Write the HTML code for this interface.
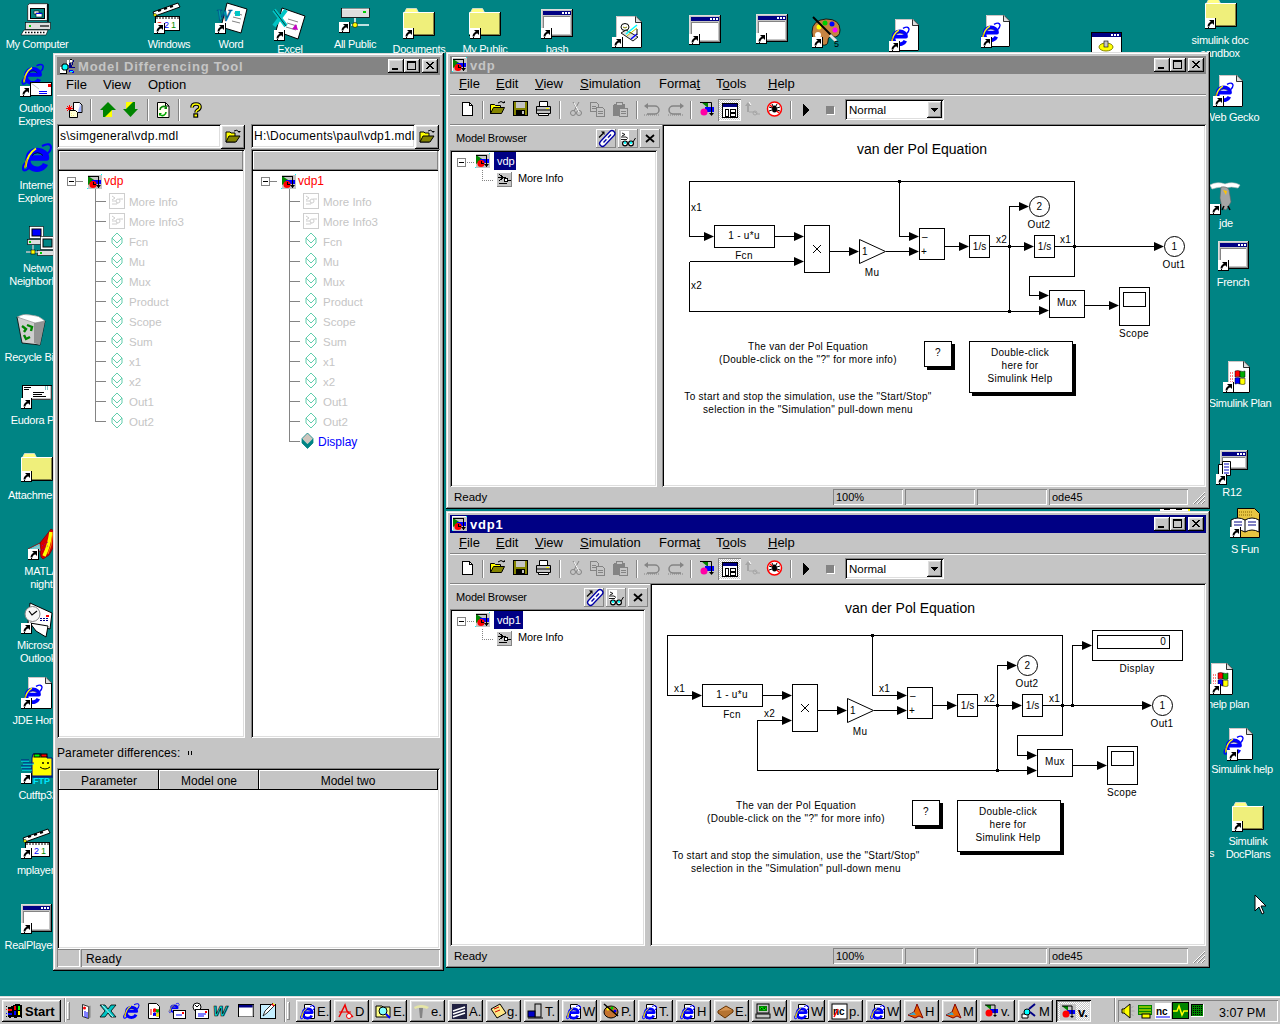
<!DOCTYPE html>
<html><head><meta charset="utf-8"><title>Desktop</title>
<style>
html,body{margin:0;padding:0;}
body{width:1280px;height:1024px;overflow:hidden;position:relative;background:#008484;font-family:"Liberation Sans", sans-serif;}
svg{overflow:visible;}
</style></head><body>
<svg style="position:absolute;left:21px;top:2px;shape-rendering:auto" width="32" height="34" viewBox="0 0 32 34" shape-rendering="crispEdges"><path d="M6.5 3.5l2-2h18v17h-20z" fill="#dedede" stroke="#000000" stroke-width="0.6"/><rect x="8" y="3" width="17" height="15" fill="#ffffff"/><rect x="9.5" y="6.5" width="14" height="10" fill="#008484" stroke="#000000"/><rect x="13" y="9" width="5" height="3" fill="#ffffff" stroke="#000000" stroke-width="0.6"/><rect x="15" y="11" width="6" height="4" fill="#ffffff" stroke="#000000" stroke-width="0.6"/><rect x="15" y="11" width="6" height="1" fill="#0000ff"/><path d="M27 2v18" stroke="#000000" stroke-width="1.5"/><rect x="4.5" y="20.5" width="25" height="7" fill="#dedede" stroke="#000000" stroke-width="0.6"/><rect x="8" y="23" width="2" height="2" fill="#00ce00"/><path d="M19 24h9" stroke="#000000" stroke-width="1.2"/><path d="M3 28h24l-2 5H0z" fill="#ffffff" stroke="#000000" stroke-width="0.6"/><path d="M4 30.5h21" stroke="#000000" stroke-width="1.4" stroke-dasharray="1.5 1.5"/></svg><div style="position:absolute;left:-263px;width:600px;text-align:center;top:38px;font-size:11px;line-height:13px;color:#ffffff;font-weight:normal;letter-spacing:-0.3px;white-space:pre;">My Computer</div><svg style="position:absolute;left:18px;top:62px;shape-rendering:auto" width="34" height="26" viewBox="0 0 34 26" shape-rendering="crispEdges"><g transform="translate(2,0) scale(0.75)"><path d="M22 5Q30 1 31 6Q31 10 27 13" stroke="#0000ff" stroke-width="2" fill="none"/><path d="M9 27Q3 32 3 27Q3 24 6 21" stroke="#0000ff" stroke-width="2" fill="none"/><path d="M8.5 17A9 7.5 0 0 1 26.5 17Z" stroke="#0000ff" stroke-width="5.5" fill="none" stroke-linejoin="round"/><path d="M8.5 17A9 8 0 0 0 25.5 23" stroke="#0000ff" stroke-width="5.5" fill="none"/><path d="M12 14.5Q17.5 9 23 14.5" stroke="#000000" stroke-width="1" fill="none" opacity="0.7"/><path d="M5.5 26Q7 13 16 7.5" stroke="#ffff00" stroke-width="2" fill="none"/><path d="M5 27Q5.5 22 7 18" stroke="#c5a500" stroke-width="1.5" fill="none"/></g></svg><svg style="position:absolute;left:30px;top:82px;shape-rendering:auto" width="23" height="15" viewBox="0 0 23 15" shape-rendering="crispEdges"><rect x="0.5" y="0.5" width="21" height="13" fill="#ffffff" stroke="#000000"/><path d="M1 1l8 6" stroke="#c5c5c5"/><path d="M9 9.5h8M9 11.5h8" stroke="#0000ff"/><rect x="18" y="2" width="3" height="3" fill="#ff0000"/></svg><svg style="position:absolute;left:20px;top:86px;" width="11" height="11" viewBox="0 0 11 11" shape-rendering="crispEdges"><rect x="0" y="0" width="11" height="11" fill="#000000"/><rect x="0" y="0" width="10" height="10" fill="#ffffff"/><path d="M4 2h5v5l-1.5-1.5z" fill="#000000" shape-rendering="auto"/><path d="M7.5 4Q3.5 5.5 3.5 8.5" stroke="#000000" stroke-width="1.9" fill="none" shape-rendering="auto"/><rect x="3" y="9" width="1" height="1" fill="#000000"/></svg><div style="position:absolute;left:-263px;width:600px;text-align:center;top:102px;font-size:11px;line-height:13px;color:#ffffff;font-weight:normal;letter-spacing:-0.3px;white-space:pre;">Outlook</div><div style="position:absolute;left:-263px;width:600px;text-align:center;top:115px;font-size:11px;line-height:13px;color:#ffffff;font-weight:normal;letter-spacing:-0.3px;white-space:pre;">Express</div><svg style="position:absolute;left:20px;top:141px;shape-rendering:auto" width="34" height="34" viewBox="0 0 34 34" shape-rendering="crispEdges"><g transform="translate(0,0) scale(1.0)"><path d="M22 5Q30 1 31 6Q31 10 27 13" stroke="#0000ff" stroke-width="2" fill="none"/><path d="M9 27Q3 32 3 27Q3 24 6 21" stroke="#0000ff" stroke-width="2" fill="none"/><path d="M8.5 17A9 7.5 0 0 1 26.5 17Z" stroke="#0000ff" stroke-width="5.5" fill="none" stroke-linejoin="round"/><path d="M8.5 17A9 8 0 0 0 25.5 23" stroke="#0000ff" stroke-width="5.5" fill="none"/><path d="M12 14.5Q17.5 9 23 14.5" stroke="#000000" stroke-width="1" fill="none" opacity="0.7"/><path d="M5.5 26Q7 13 16 7.5" stroke="#ffff00" stroke-width="2" fill="none"/><path d="M5 27Q5.5 22 7 18" stroke="#c5a500" stroke-width="1.5" fill="none"/></g></svg><div style="position:absolute;left:-263px;width:600px;text-align:center;top:179px;font-size:11px;line-height:13px;color:#ffffff;font-weight:normal;letter-spacing:-0.3px;white-space:pre;">Internet</div><div style="position:absolute;left:-263px;width:600px;text-align:center;top:192px;font-size:11px;line-height:13px;color:#ffffff;font-weight:normal;letter-spacing:-0.3px;white-space:pre;">Explorer</div><svg style="position:absolute;left:26px;top:225px;shape-rendering:auto" width="30" height="34" viewBox="0 0 30 34" shape-rendering="crispEdges"><rect x="3.5" y="1.5" width="14" height="12" fill="#ffffff" stroke="#000000" stroke-width="0.6"/><rect x="6" y="4" width="9" height="7" fill="#0000ff" stroke="#000000"/><rect x="1.5" y="14.5" width="16" height="5" fill="#dedede" stroke="#000000" stroke-width="0.6"/><rect x="3" y="16" width="2" height="2" fill="#00ce00"/><rect x="14.5" y="11.5" width="14" height="13" fill="#ffffff" stroke="#000000" stroke-width="0.6"/><rect x="17" y="14" width="9" height="8" fill="#008484" stroke="#000000"/><rect x="11.5" y="25.5" width="17" height="5" fill="#dedede" stroke="#000000" stroke-width="0.6"/><rect x="14" y="27" width="2" height="2" fill="#00ce00"/><path d="M7 20v7M0 27h12" stroke="#c5c5c5" stroke-width="1.5"/><rect x="5" y="25" width="4" height="4" fill="#ffff00" stroke="#000000" stroke-width="0.6"/></svg><div style="position:absolute;left:-258px;width:600px;text-align:center;top:262px;font-size:11px;line-height:13px;color:#ffffff;font-weight:normal;letter-spacing:-0.3px;white-space:pre;">Network</div><div style="position:absolute;left:-258px;width:600px;text-align:center;top:275px;font-size:11px;line-height:13px;color:#ffffff;font-weight:normal;letter-spacing:-0.3px;white-space:pre;">Neighborhood</div><svg style="position:absolute;left:15px;top:313px;shape-rendering:auto" width="32" height="34" viewBox="0 0 32 34" shape-rendering="crispEdges"><path d="M2 4l28 4l-5 24l-18-2z" fill="#cecece" stroke="#000000" stroke-width="0.8"/><path d="M19 8l11 0l-5 24l-6-2z" fill="#949494"/><path d="M2 4Q8 0 16 2Q24 2 30 8L20 10Z" fill="#ffffff" stroke="#848484" stroke-width="0.6"/><path d="M7 13l4 3l-2 3M12 12l5 2l-1 4M15 24l-4 2l-2-4" stroke="#008400" stroke-width="2.4" fill="none"/></svg><div style="position:absolute;left:-268px;width:600px;text-align:center;top:351px;font-size:11px;line-height:13px;color:#ffffff;font-weight:normal;letter-spacing:-0.3px;white-space:pre;">Recycle Bin</div><svg style="position:absolute;left:21px;top:384px;shape-rendering:auto" width="32" height="18" viewBox="0 0 32 18" shape-rendering="crispEdges"><rect x="1.5" y="1.5" width="29" height="14" fill="#ffffff" stroke="#000000"/><path d="M30 2v14M2 15h28" stroke="#848484"/><path d="M3 3.5h7M3 5.5h5M12 8.5h11M12 10.5h9M12 12.5h13" stroke="#000000"/><path d="M24 3h3M24 5h3" stroke="#008484" stroke-dasharray="1 1"/></svg><svg style="position:absolute;left:21px;top:398px;" width="11" height="11" viewBox="0 0 11 11" shape-rendering="crispEdges"><rect x="0" y="0" width="11" height="11" fill="#000000"/><rect x="0" y="0" width="10" height="10" fill="#ffffff"/><path d="M4 2h5v5l-1.5-1.5z" fill="#000000" shape-rendering="auto"/><path d="M7.5 4Q3.5 5.5 3.5 8.5" stroke="#000000" stroke-width="1.9" fill="none" shape-rendering="auto"/><rect x="3" y="9" width="1" height="1" fill="#000000"/></svg><div style="position:absolute;left:-263px;width:600px;text-align:center;top:414px;font-size:11px;line-height:13px;color:#ffffff;font-weight:normal;letter-spacing:-0.3px;white-space:pre;">Eudora Pro</div><svg style="position:absolute;left:21px;top:453px;shape-rendering:auto" width="33" height="29" viewBox="0 0 33 29" shape-rendering="crispEdges"><path d="M1.5 4.5L3.5 0.5H13.5L15.5 4.5Z" fill="#ffff84" stroke="#dedede" stroke-width="0.8"/><rect x="0.5" y="4.5" width="31" height="22" fill="#efef7b"/><path d="M0.5 26V4.5H31" stroke="#ffffff" fill="none"/><path d="M31.5 4v23.5H0" stroke="#000000" fill="none"/><path d="M30.5 5v21.5H1" stroke="#848442" fill="none"/></svg><svg style="position:absolute;left:21px;top:471px;" width="11" height="11" viewBox="0 0 11 11" shape-rendering="crispEdges"><rect x="0" y="0" width="11" height="11" fill="#000000"/><rect x="0" y="0" width="10" height="10" fill="#ffffff"/><path d="M4 2h5v5l-1.5-1.5z" fill="#000000" shape-rendering="auto"/><path d="M7.5 4Q3.5 5.5 3.5 8.5" stroke="#000000" stroke-width="1.9" fill="none" shape-rendering="auto"/><rect x="3" y="9" width="1" height="1" fill="#000000"/></svg><div style="position:absolute;left:-263px;width:600px;text-align:center;top:489px;font-size:11px;line-height:13px;color:#ffffff;font-weight:normal;letter-spacing:-0.3px;white-space:pre;">Attachments</div><svg style="position:absolute;left:27px;top:528px;shape-rendering:auto" width="28" height="34" viewBox="0 0 28 34" shape-rendering="crispEdges"><path d="M13 15L21 5L24 1L27 3L26 20L22 27L16 31L14 29L13 22Z" fill="#d60000" stroke="#840000" stroke-width="0.8"/><path d="M24 4Q22 18 17 28" stroke="#ffff00" stroke-width="3.5" fill="none"/><path d="M25.5 6Q25 18 21 26" stroke="#ff8400" stroke-width="1" fill="none"/><path d="M1 21L13 15L14 23L4 24Z" fill="#94c5c5" stroke="#840000" stroke-width="0.8"/><path d="M4 21l8-4M6 23l7-3" stroke="#00e6ff" stroke-dasharray="1 1"/><path d="M15 18l6-4M15 22l7-5" stroke="#8400c5" stroke-dasharray="1 2"/></svg><svg style="position:absolute;left:28px;top:549px;" width="11" height="11" viewBox="0 0 11 11" shape-rendering="crispEdges"><rect x="0" y="0" width="11" height="11" fill="#000000"/><rect x="0" y="0" width="10" height="10" fill="#ffffff"/><path d="M4 2h5v5l-1.5-1.5z" fill="#000000" shape-rendering="auto"/><path d="M7.5 4Q3.5 5.5 3.5 8.5" stroke="#000000" stroke-width="1.9" fill="none" shape-rendering="auto"/><rect x="3" y="9" width="1" height="1" fill="#000000"/></svg><div style="position:absolute;left:-255px;width:600px;text-align:center;top:565px;font-size:11px;line-height:13px;color:#ffffff;font-weight:normal;letter-spacing:-0.3px;white-space:pre;">MATLAB</div><div style="position:absolute;left:-255px;width:600px;text-align:center;top:578px;font-size:11px;line-height:13px;color:#ffffff;font-weight:normal;letter-spacing:-0.3px;white-space:pre;">nightly</div><svg style="position:absolute;left:20px;top:601px;shape-rendering:auto" width="34" height="34" viewBox="0 0 34 34" shape-rendering="crispEdges"><path d="M10 2L32 12L30 28L8 22Z" fill="#ffffff" stroke="#000000"/><path d="M10 22L28 25L26 36L16 30Z" fill="#ffffff" stroke="#000000"/><circle cx="12.5" cy="13" r="7.5" fill="#f7f7f7" stroke="#848484"/><path d="M9 10l3 4l5-4" stroke="#000000" stroke-width="1.2" fill="none"/><path d="M20 17.5h9M20 19.5h8" stroke="#000084" stroke-dasharray="2 1"/><rect x="26" y="14" width="3" height="2" fill="#ff0000"/></svg><svg style="position:absolute;left:21px;top:623px;" width="11" height="11" viewBox="0 0 11 11" shape-rendering="crispEdges"><rect x="0" y="0" width="11" height="11" fill="#000000"/><rect x="0" y="0" width="10" height="10" fill="#ffffff"/><path d="M4 2h5v5l-1.5-1.5z" fill="#000000" shape-rendering="auto"/><path d="M7.5 4Q3.5 5.5 3.5 8.5" stroke="#000000" stroke-width="1.9" fill="none" shape-rendering="auto"/><rect x="3" y="9" width="1" height="1" fill="#000000"/></svg><div style="position:absolute;left:-262px;width:600px;text-align:center;top:639px;font-size:11px;line-height:13px;color:#ffffff;font-weight:normal;letter-spacing:-0.3px;white-space:pre;">Microsoft</div><div style="position:absolute;left:-262px;width:600px;text-align:center;top:652px;font-size:11px;line-height:13px;color:#ffffff;font-weight:normal;letter-spacing:-0.3px;white-space:pre;">Outlook</div><svg style="position:absolute;left:20px;top:677px;shape-rendering:auto" width="32" height="32" viewBox="0 0 32 32" shape-rendering="crispEdges"><g transform="translate(8,0)"><path d="M0 0H18L24 6V32H0Z" fill="#ffffff"/><path d="M0.5 31.5V0.5H18" stroke="#cec5c5" fill="none"/><path d="M18 0.5L23.5 6V31.5H0" stroke="#000000" fill="none"/><path d="M17.5 0.5V6.5H23.5" fill="#dedede" stroke="#000000" stroke-width="0.8"/></g><g transform="translate(1,6) scale(0.68)"><path d="M22 5Q30 1 31 6Q31 10 27 13" stroke="#0000ff" stroke-width="2" fill="none"/><path d="M9 27Q3 32 3 27Q3 24 6 21" stroke="#0000ff" stroke-width="2" fill="none"/><path d="M8.5 17A9 7.5 0 0 1 26.5 17Z" stroke="#0000ff" stroke-width="5.5" fill="none" stroke-linejoin="round"/><path d="M8.5 17A9 8 0 0 0 25.5 23" stroke="#0000ff" stroke-width="5.5" fill="none"/><path d="M12 14.5Q17.5 9 23 14.5" stroke="#000000" stroke-width="1" fill="none" opacity="0.7"/><path d="M5.5 26Q7 13 16 7.5" stroke="#ffff00" stroke-width="2" fill="none"/><path d="M5 27Q5.5 22 7 18" stroke="#c5a500" stroke-width="1.5" fill="none"/></g></svg><svg style="position:absolute;left:21px;top:698px;" width="11" height="11" viewBox="0 0 11 11" shape-rendering="crispEdges"><rect x="0" y="0" width="11" height="11" fill="#000000"/><rect x="0" y="0" width="10" height="10" fill="#ffffff"/><path d="M4 2h5v5l-1.5-1.5z" fill="#000000" shape-rendering="auto"/><path d="M7.5 4Q3.5 5.5 3.5 8.5" stroke="#000000" stroke-width="1.9" fill="none" shape-rendering="auto"/><rect x="3" y="9" width="1" height="1" fill="#000000"/></svg><div style="position:absolute;left:-262px;width:600px;text-align:center;top:714px;font-size:11px;line-height:13px;color:#ffffff;font-weight:normal;letter-spacing:-0.3px;white-space:pre;">JDE Home</div><svg style="position:absolute;left:20px;top:752px;shape-rendering:auto" width="34" height="32" viewBox="0 0 34 32" shape-rendering="crispEdges"><path d="M13 2h8v2h6v2h5v18H12V6Z" fill="#ffff00" stroke="#000084"/><rect x="14" y="2" width="6" height="3" fill="#00ff00" stroke="#000000"/><rect x="21" y="2" width="6" height="3" fill="#ff0000" stroke="#000000"/><circle cx="23" cy="11" r="1" fill="#000000"/><circle cx="28" cy="11" r="1" fill="#000000"/><path d="M20 15q5 4 10 0" stroke="#000000" fill="none"/><path d="M1 9h8M3 12h11M1 15h10M2 18h10" stroke="#00ffff" stroke-width="1.2"/><path d="M1 8h8M3 11h11M1 14h10M2 17h10" stroke="#000084" stroke-width="0.8"/><path d="M12 25h24" stroke="#000084"/><text x="13" y="32" font-size="9" font-weight="bold" fill="#00e6ff" font-family="Liberation Sans">FTP</text></svg><svg style="position:absolute;left:21px;top:773px;" width="11" height="11" viewBox="0 0 11 11" shape-rendering="crispEdges"><rect x="0" y="0" width="11" height="11" fill="#000000"/><rect x="0" y="0" width="10" height="10" fill="#ffffff"/><path d="M4 2h5v5l-1.5-1.5z" fill="#000000" shape-rendering="auto"/><path d="M7.5 4Q3.5 5.5 3.5 8.5" stroke="#000000" stroke-width="1.9" fill="none" shape-rendering="auto"/><rect x="3" y="9" width="1" height="1" fill="#000000"/></svg><div style="position:absolute;left:-262px;width:600px;text-align:center;top:789px;font-size:11px;line-height:13px;color:#ffffff;font-weight:normal;letter-spacing:-0.3px;white-space:pre;">Cutftp32</div><svg style="position:absolute;left:22px;top:828px;shape-rendering:auto" width="32" height="32" viewBox="0 0 32 32" shape-rendering="crispEdges"><path d="M1 10L26 1L28 5L3 14Z" fill="#ffffff" stroke="#000000"/><path d="M6 9l3-1M12 7l3-1M18 5l3-1" stroke="#000000" stroke-width="2"/><circle cx="3" cy="13" r="1.5" fill="#ffff00" stroke="#000000" stroke-width="0.5"/><rect x="3.5" y="14.5" width="24" height="14" fill="#ffffff" stroke="#000000"/><path d="M4 16h23" stroke="#000000" stroke-dasharray="2 1"/><text x="5" y="26" font-size="9" fill="#ff0000" font-family="Liberation Sans">3</text><text x="12" y="26" font-size="9" fill="#0000ff" font-family="Liberation Sans">2</text><text x="19" y="26" font-size="9" fill="#008c00" font-family="Liberation Sans">1</text></svg><svg style="position:absolute;left:21px;top:848px;" width="11" height="11" viewBox="0 0 11 11" shape-rendering="crispEdges"><rect x="0" y="0" width="11" height="11" fill="#000000"/><rect x="0" y="0" width="10" height="10" fill="#ffffff"/><path d="M4 2h5v5l-1.5-1.5z" fill="#000000" shape-rendering="auto"/><path d="M7.5 4Q3.5 5.5 3.5 8.5" stroke="#000000" stroke-width="1.9" fill="none" shape-rendering="auto"/><rect x="3" y="9" width="1" height="1" fill="#000000"/></svg><div style="position:absolute;left:-264.5px;width:600px;text-align:center;top:864px;font-size:11px;line-height:13px;color:#ffffff;font-weight:normal;letter-spacing:-0.3px;white-space:pre;">mplayer</div><svg style="position:absolute;left:21px;top:904px;" width="31" height="28" viewBox="0 0 31 28" shape-rendering="crispEdges"><rect x="0" y="0" width="31" height="28" fill="#c5c5c5"/><rect x="0" y="0" width="30" height="1" fill="#dedede"/><rect x="0" y="0" width="1" height="27" fill="#dedede"/><rect x="30" y="0" width="1" height="28" fill="#000000"/><rect x="0" y="27" width="31" height="1" fill="#000000"/><rect x="29" y="1" width="1" height="26" fill="#848484"/><rect x="1" y="26" width="29" height="1" fill="#848484"/><rect x="2" y="2" width="27" height="4" fill="#000084"/><rect x="20" y="3" width="2" height="2" fill="#ffffff"/><rect x="23" y="3" width="2" height="2" fill="#ffffff"/><rect x="26" y="3" width="2" height="2" fill="#ffffff"/><rect x="2" y="7" width="26" height="18" fill="#848484"/><rect x="3" y="8" width="25" height="17" fill="#ffffff"/></svg><svg style="position:absolute;left:21px;top:923px;" width="11" height="11" viewBox="0 0 11 11" shape-rendering="crispEdges"><rect x="0" y="0" width="11" height="11" fill="#000000"/><rect x="0" y="0" width="10" height="10" fill="#ffffff"/><path d="M4 2h5v5l-1.5-1.5z" fill="#000000" shape-rendering="auto"/><path d="M7.5 4Q3.5 5.5 3.5 8.5" stroke="#000000" stroke-width="1.9" fill="none" shape-rendering="auto"/><rect x="3" y="9" width="1" height="1" fill="#000000"/></svg><div style="position:absolute;left:-270px;width:600px;text-align:center;top:939px;font-size:11px;line-height:13px;color:#ffffff;font-weight:normal;letter-spacing:-0.3px;white-space:pre;">RealPlayer</div><svg style="position:absolute;left:152px;top:2px;shape-rendering:auto" width="32" height="32" viewBox="0 0 32 32" shape-rendering="crispEdges"><path d="M1 10L26 1L28 5L3 14Z" fill="#ffffff" stroke="#000000"/><path d="M6 9l3-1M12 7l3-1M18 5l3-1" stroke="#000000" stroke-width="2"/><circle cx="3" cy="13" r="1.5" fill="#ffff00" stroke="#000000" stroke-width="0.5"/><rect x="3.5" y="14.5" width="24" height="14" fill="#ffffff" stroke="#000000"/><path d="M4 16h23" stroke="#000000" stroke-dasharray="2 1"/><text x="5" y="26" font-size="9" fill="#ff0000" font-family="Liberation Sans">3</text><text x="12" y="26" font-size="9" fill="#0000ff" font-family="Liberation Sans">2</text><text x="19" y="26" font-size="9" fill="#008c00" font-family="Liberation Sans">1</text></svg><svg style="position:absolute;left:154px;top:23px;" width="11" height="11" viewBox="0 0 11 11" shape-rendering="crispEdges"><rect x="0" y="0" width="11" height="11" fill="#000000"/><rect x="0" y="0" width="10" height="10" fill="#ffffff"/><path d="M4 2h5v5l-1.5-1.5z" fill="#000000" shape-rendering="auto"/><path d="M7.5 4Q3.5 5.5 3.5 8.5" stroke="#000000" stroke-width="1.9" fill="none" shape-rendering="auto"/><rect x="3" y="9" width="1" height="1" fill="#000000"/></svg><div style="position:absolute;left:-131px;width:600px;text-align:center;top:38px;font-size:11px;line-height:13px;color:#ffffff;font-weight:normal;letter-spacing:-0.3px;white-space:pre;">Windows</div><div style="position:absolute;left:-131px;width:600px;text-align:center;top:51px;font-size:11px;line-height:13px;color:#ffffff;font-weight:normal;letter-spacing:-0.3px;white-space:pre;">Media Player</div><svg style="position:absolute;left:214px;top:2px;shape-rendering:auto" width="34" height="34" viewBox="0 0 34 34" shape-rendering="crispEdges"><path d="M13 1L33 7L27 31L7 25Z" fill="#ffffff" stroke="#000000"/><path d="M20 11l8 2M19 15l8 2M18 19l8 2" stroke="#848484"/><rect x="21" y="9" width="5" height="5" fill="#00c5c5"/><text x="2" y="19" font-size="17" font-weight="bold" font-style="italic" fill="#00a5a5" stroke="#004284" stroke-width="0.6" font-family="Liberation Serif">W</text></svg><svg style="position:absolute;left:215px;top:23px;" width="11" height="11" viewBox="0 0 11 11" shape-rendering="crispEdges"><rect x="0" y="0" width="11" height="11" fill="#000000"/><rect x="0" y="0" width="10" height="10" fill="#ffffff"/><path d="M4 2h5v5l-1.5-1.5z" fill="#000000" shape-rendering="auto"/><path d="M7.5 4Q3.5 5.5 3.5 8.5" stroke="#000000" stroke-width="1.9" fill="none" shape-rendering="auto"/><rect x="3" y="9" width="1" height="1" fill="#000000"/></svg><div style="position:absolute;left:-69px;width:600px;text-align:center;top:38px;font-size:11px;line-height:13px;color:#ffffff;font-weight:normal;letter-spacing:-0.3px;white-space:pre;">Word</div><svg style="position:absolute;left:272px;top:7px;shape-rendering:auto" width="34" height="34" viewBox="0 0 34 34" shape-rendering="crispEdges"><path d="M10 1L33 9L26 32L4 24Z" fill="#ffffff" stroke="#000000"/><path d="M16 12l10 3M15 16l10 3M14 20l10 3" stroke="#848484"/><path d="M20 22l4-5l2 6z" fill="#c500c5"/><path d="M2 3L14 19M14 3L2 19" stroke="#00c5c5" stroke-width="4"/><path d="M2 3L14 19" stroke="#004242" stroke-width="1"/></svg><svg style="position:absolute;left:274px;top:30px;" width="11" height="11" viewBox="0 0 11 11" shape-rendering="crispEdges"><rect x="0" y="0" width="11" height="11" fill="#000000"/><rect x="0" y="0" width="10" height="10" fill="#ffffff"/><path d="M4 2h5v5l-1.5-1.5z" fill="#000000" shape-rendering="auto"/><path d="M7.5 4Q3.5 5.5 3.5 8.5" stroke="#000000" stroke-width="1.9" fill="none" shape-rendering="auto"/><rect x="3" y="9" width="1" height="1" fill="#000000"/></svg><div style="position:absolute;left:-10px;width:600px;text-align:center;top:43px;font-size:11px;line-height:13px;color:#ffffff;font-weight:normal;letter-spacing:-0.3px;white-space:pre;">Excel</div><svg style="position:absolute;left:339px;top:6px;shape-rendering:auto" width="34" height="30" viewBox="0 0 34 30" shape-rendering="crispEdges"><rect x="2.5" y="2.5" width="28" height="9" fill="#dedede" stroke="#000000" stroke-width="0.8"/><path d="M3 3h27" stroke="#ffffff"/><rect x="24" y="5" width="3" height="2" fill="#00ce00"/><path d="M16 12v6M12 19h18" stroke="#ffffff" stroke-width="1.5"/><circle cx="16" cy="19" r="2.5" fill="#ffff00" stroke="#000000" stroke-width="0.6"/></svg><svg style="position:absolute;left:339px;top:22px;" width="11" height="11" viewBox="0 0 11 11" shape-rendering="crispEdges"><rect x="0" y="0" width="11" height="11" fill="#000000"/><rect x="0" y="0" width="10" height="10" fill="#ffffff"/><path d="M4 2h5v5l-1.5-1.5z" fill="#000000" shape-rendering="auto"/><path d="M7.5 4Q3.5 5.5 3.5 8.5" stroke="#000000" stroke-width="1.9" fill="none" shape-rendering="auto"/><rect x="3" y="9" width="1" height="1" fill="#000000"/></svg><div style="position:absolute;left:55px;width:600px;text-align:center;top:38px;font-size:11px;line-height:13px;color:#ffffff;font-weight:normal;letter-spacing:-0.3px;white-space:pre;">All Public</div><div style="position:absolute;left:55px;width:600px;text-align:center;top:51px;font-size:11px;line-height:13px;color:#ffffff;font-weight:normal;letter-spacing:-0.3px;white-space:pre;">Folders</div><svg style="position:absolute;left:403px;top:8px;shape-rendering:auto" width="33" height="29" viewBox="0 0 33 29" shape-rendering="crispEdges"><path d="M1.5 4.5L3.5 0.5H13.5L15.5 4.5Z" fill="#ffff84" stroke="#dedede" stroke-width="0.8"/><rect x="0.5" y="4.5" width="31" height="22" fill="#efef7b"/><path d="M0.5 26V4.5H31" stroke="#ffffff" fill="none"/><path d="M31.5 4v23.5H0" stroke="#000000" fill="none"/><path d="M30.5 5v21.5H1" stroke="#848442" fill="none"/></svg><svg style="position:absolute;left:403px;top:28px;" width="11" height="11" viewBox="0 0 11 11" shape-rendering="crispEdges"><rect x="0" y="0" width="11" height="11" fill="#000000"/><rect x="0" y="0" width="10" height="10" fill="#ffffff"/><path d="M4 2h5v5l-1.5-1.5z" fill="#000000" shape-rendering="auto"/><path d="M7.5 4Q3.5 5.5 3.5 8.5" stroke="#000000" stroke-width="1.9" fill="none" shape-rendering="auto"/><rect x="3" y="9" width="1" height="1" fill="#000000"/></svg><div style="position:absolute;left:119px;width:600px;text-align:center;top:43px;font-size:11px;line-height:13px;color:#ffffff;font-weight:normal;letter-spacing:-0.3px;white-space:pre;">Documents</div><svg style="position:absolute;left:469px;top:8px;shape-rendering:auto" width="33" height="29" viewBox="0 0 33 29" shape-rendering="crispEdges"><path d="M1.5 4.5L3.5 0.5H13.5L15.5 4.5Z" fill="#ffff84" stroke="#dedede" stroke-width="0.8"/><rect x="0.5" y="4.5" width="31" height="22" fill="#efef7b"/><path d="M0.5 26V4.5H31" stroke="#ffffff" fill="none"/><path d="M31.5 4v23.5H0" stroke="#000000" fill="none"/><path d="M30.5 5v21.5H1" stroke="#848442" fill="none"/></svg><svg style="position:absolute;left:470px;top:28px;" width="11" height="11" viewBox="0 0 11 11" shape-rendering="crispEdges"><rect x="0" y="0" width="11" height="11" fill="#000000"/><rect x="0" y="0" width="10" height="10" fill="#ffffff"/><path d="M4 2h5v5l-1.5-1.5z" fill="#000000" shape-rendering="auto"/><path d="M7.5 4Q3.5 5.5 3.5 8.5" stroke="#000000" stroke-width="1.9" fill="none" shape-rendering="auto"/><rect x="3" y="9" width="1" height="1" fill="#000000"/></svg><div style="position:absolute;left:185px;width:600px;text-align:center;top:43px;font-size:11px;line-height:13px;color:#ffffff;font-weight:normal;letter-spacing:-0.3px;white-space:pre;">My Public</div><svg style="position:absolute;left:541px;top:9px;" width="32" height="28" viewBox="0 0 32 28" shape-rendering="crispEdges"><rect x="0" y="0" width="32" height="28" fill="#c5c5c5"/><rect x="0" y="0" width="31" height="1" fill="#dedede"/><rect x="0" y="0" width="1" height="27" fill="#dedede"/><rect x="31" y="0" width="1" height="28" fill="#000000"/><rect x="0" y="27" width="32" height="1" fill="#000000"/><rect x="30" y="1" width="1" height="26" fill="#848484"/><rect x="1" y="26" width="30" height="1" fill="#848484"/><rect x="2" y="2" width="28" height="4" fill="#000084"/><rect x="21" y="3" width="2" height="2" fill="#ffffff"/><rect x="24" y="3" width="2" height="2" fill="#ffffff"/><rect x="27" y="3" width="2" height="2" fill="#ffffff"/><rect x="2" y="7" width="27" height="18" fill="#848484"/><rect x="3" y="8" width="26" height="17" fill="#ffffff"/></svg><svg style="position:absolute;left:541px;top:28px;" width="11" height="11" viewBox="0 0 11 11" shape-rendering="crispEdges"><rect x="0" y="0" width="11" height="11" fill="#000000"/><rect x="0" y="0" width="10" height="10" fill="#ffffff"/><path d="M4 2h5v5l-1.5-1.5z" fill="#000000" shape-rendering="auto"/><path d="M7.5 4Q3.5 5.5 3.5 8.5" stroke="#000000" stroke-width="1.9" fill="none" shape-rendering="auto"/><rect x="3" y="9" width="1" height="1" fill="#000000"/></svg><div style="position:absolute;left:257px;width:600px;text-align:center;top:43px;font-size:11px;line-height:13px;color:#ffffff;font-weight:normal;letter-spacing:-0.3px;white-space:pre;">bash</div><svg style="position:absolute;left:616px;top:16px;shape-rendering:auto" width="26" height="32" viewBox="0 0 26 32" shape-rendering="crispEdges"><g transform="translate(0,0)"><path d="M0 0H20L26 6V32H0Z" fill="#ffffff"/><path d="M0.5 31.5V0.5H20" stroke="#cec5c5" fill="none"/><path d="M20 0.5L25.5 6V31.5H0" stroke="#000000" fill="none"/><path d="M19.5 0.5V6.5H25.5" fill="#dedede" stroke="#000000" stroke-width="0.8"/></g><ellipse cx="9" cy="11" rx="4" ry="3.5" fill="#ffffff" stroke="#000000"/><path d="M7 11q2 2 4 0" stroke="#848400" fill="none"/><path d="M5 17l5-3l12 7l-5 4z" fill="#dedede" stroke="#000000" stroke-width="0.9"/><path d="M10 18l11-9" stroke="#00ffff" stroke-width="1.5"/><path d="M11 20l10-8" stroke="#c5c500" stroke-width="1"/><path d="M15 23l6-5" stroke="#0000ff" stroke-width="1.5"/><path d="M21 13v6" stroke="#000000"/></svg><svg style="position:absolute;left:612px;top:37px;" width="11" height="11" viewBox="0 0 11 11" shape-rendering="crispEdges"><rect x="0" y="0" width="11" height="11" fill="#000000"/><rect x="0" y="0" width="10" height="10" fill="#ffffff"/><path d="M4 2h5v5l-1.5-1.5z" fill="#000000" shape-rendering="auto"/><path d="M7.5 4Q3.5 5.5 3.5 8.5" stroke="#000000" stroke-width="1.9" fill="none" shape-rendering="auto"/><rect x="3" y="9" width="1" height="1" fill="#000000"/></svg><div style="position:absolute;left:404px;width:600px;text-align:center;top:50px;font-size:11px;line-height:13px;color:#ffffff;font-weight:normal;letter-spacing:-0.3px;white-space:pre;">Install</div><svg style="position:absolute;left:689px;top:15px;" width="32" height="28" viewBox="0 0 32 28" shape-rendering="crispEdges"><rect x="0" y="0" width="32" height="28" fill="#c5c5c5"/><rect x="0" y="0" width="31" height="1" fill="#dedede"/><rect x="0" y="0" width="1" height="27" fill="#dedede"/><rect x="31" y="0" width="1" height="28" fill="#000000"/><rect x="0" y="27" width="32" height="1" fill="#000000"/><rect x="30" y="1" width="1" height="26" fill="#848484"/><rect x="1" y="26" width="30" height="1" fill="#848484"/><rect x="2" y="2" width="28" height="4" fill="#000084"/><rect x="21" y="3" width="2" height="2" fill="#ffffff"/><rect x="24" y="3" width="2" height="2" fill="#ffffff"/><rect x="27" y="3" width="2" height="2" fill="#ffffff"/><rect x="2" y="7" width="27" height="18" fill="#848484"/><rect x="3" y="8" width="26" height="17" fill="#ffffff"/></svg><svg style="position:absolute;left:689px;top:34px;" width="11" height="11" viewBox="0 0 11 11" shape-rendering="crispEdges"><rect x="0" y="0" width="11" height="11" fill="#000000"/><rect x="0" y="0" width="10" height="10" fill="#ffffff"/><path d="M4 2h5v5l-1.5-1.5z" fill="#000000" shape-rendering="auto"/><path d="M7.5 4Q3.5 5.5 3.5 8.5" stroke="#000000" stroke-width="1.9" fill="none" shape-rendering="auto"/><rect x="3" y="9" width="1" height="1" fill="#000000"/></svg><div style="position:absolute;left:473px;width:600px;text-align:center;top:50px;font-size:11px;line-height:13px;color:#ffffff;font-weight:normal;letter-spacing:-0.3px;white-space:pre;">Fonts</div><svg style="position:absolute;left:756px;top:14px;" width="32" height="28" viewBox="0 0 32 28" shape-rendering="crispEdges"><rect x="0" y="0" width="32" height="28" fill="#c5c5c5"/><rect x="0" y="0" width="31" height="1" fill="#dedede"/><rect x="0" y="0" width="1" height="27" fill="#dedede"/><rect x="31" y="0" width="1" height="28" fill="#000000"/><rect x="0" y="27" width="32" height="1" fill="#000000"/><rect x="30" y="1" width="1" height="26" fill="#848484"/><rect x="1" y="26" width="30" height="1" fill="#848484"/><rect x="2" y="2" width="28" height="4" fill="#000084"/><rect x="21" y="3" width="2" height="2" fill="#ffffff"/><rect x="24" y="3" width="2" height="2" fill="#ffffff"/><rect x="27" y="3" width="2" height="2" fill="#ffffff"/><rect x="2" y="7" width="27" height="18" fill="#848484"/><rect x="3" y="8" width="26" height="17" fill="#ffffff"/></svg><svg style="position:absolute;left:756px;top:33px;" width="11" height="11" viewBox="0 0 11 11" shape-rendering="crispEdges"><rect x="0" y="0" width="11" height="11" fill="#000000"/><rect x="0" y="0" width="10" height="10" fill="#ffffff"/><path d="M4 2h5v5l-1.5-1.5z" fill="#000000" shape-rendering="auto"/><path d="M7.5 4Q3.5 5.5 3.5 8.5" stroke="#000000" stroke-width="1.9" fill="none" shape-rendering="auto"/><rect x="3" y="9" width="1" height="1" fill="#000000"/></svg><svg style="position:absolute;left:810px;top:16px;shape-rendering:auto" width="34" height="32" viewBox="0 0 34 32" shape-rendering="crispEdges"><path d="M2 16Q2 4 16 3Q30 3 30 14Q30 22 22 21Q18 20 18 25Q18 30 12 29Q2 28 2 16Z" fill="#c58442" stroke="#000000" stroke-width="0.8"/><circle cx="9" cy="11" r="2.5" fill="#ffff00"/><circle cx="15" cy="7" r="2.5" fill="#00ce00"/><circle cx="22" cy="8" r="2.5" fill="#0000ff"/><circle cx="25" cy="14" r="2.5" fill="#ff00ff"/><circle cx="8" cy="19" r="3" fill="#ffffff"/><path d="M3 1L24 22" stroke="#000000" stroke-width="2"/><path d="M20 19l6 6" stroke="#e6e6e6" stroke-width="3"/></svg><svg style="position:absolute;left:812px;top:37px;" width="11" height="11" viewBox="0 0 11 11" shape-rendering="crispEdges"><rect x="0" y="0" width="11" height="11" fill="#000000"/><rect x="0" y="0" width="10" height="10" fill="#ffffff"/><path d="M4 2h5v5l-1.5-1.5z" fill="#000000" shape-rendering="auto"/><path d="M7.5 4Q3.5 5.5 3.5 8.5" stroke="#000000" stroke-width="1.9" fill="none" shape-rendering="auto"/><rect x="3" y="9" width="1" height="1" fill="#000000"/></svg><div style="position:absolute;left:834px;top:39px;font-size:9px;line-height:10px;color:#000000;font-weight:normal;letter-spacing:0px;white-space:pre;">5</div><svg style="position:absolute;left:887px;top:19px;shape-rendering:auto" width="32" height="32" viewBox="0 0 32 32" shape-rendering="crispEdges"><g transform="translate(8,0)"><path d="M0 0H18L24 6V32H0Z" fill="#ffffff"/><path d="M0.5 31.5V0.5H18" stroke="#cec5c5" fill="none"/><path d="M18 0.5L23.5 6V31.5H0" stroke="#000000" fill="none"/><path d="M17.5 0.5V6.5H23.5" fill="#dedede" stroke="#000000" stroke-width="0.8"/></g><g transform="translate(1,6) scale(0.68)"><path d="M22 5Q30 1 31 6Q31 10 27 13" stroke="#0000ff" stroke-width="2" fill="none"/><path d="M9 27Q3 32 3 27Q3 24 6 21" stroke="#0000ff" stroke-width="2" fill="none"/><path d="M8.5 17A9 7.5 0 0 1 26.5 17Z" stroke="#0000ff" stroke-width="5.5" fill="none" stroke-linejoin="round"/><path d="M8.5 17A9 8 0 0 0 25.5 23" stroke="#0000ff" stroke-width="5.5" fill="none"/><path d="M12 14.5Q17.5 9 23 14.5" stroke="#000000" stroke-width="1" fill="none" opacity="0.7"/><path d="M5.5 26Q7 13 16 7.5" stroke="#ffff00" stroke-width="2" fill="none"/><path d="M5 27Q5.5 22 7 18" stroke="#c5a500" stroke-width="1.5" fill="none"/></g></svg><svg style="position:absolute;left:889px;top:41px;" width="11" height="11" viewBox="0 0 11 11" shape-rendering="crispEdges"><rect x="0" y="0" width="11" height="11" fill="#000000"/><rect x="0" y="0" width="10" height="10" fill="#ffffff"/><path d="M4 2h5v5l-1.5-1.5z" fill="#000000" shape-rendering="auto"/><path d="M7.5 4Q3.5 5.5 3.5 8.5" stroke="#000000" stroke-width="1.9" fill="none" shape-rendering="auto"/><rect x="3" y="9" width="1" height="1" fill="#000000"/></svg><svg style="position:absolute;left:978px;top:15px;shape-rendering:auto" width="32" height="32" viewBox="0 0 32 32" shape-rendering="crispEdges"><g transform="translate(8,0)"><path d="M0 0H18L24 6V32H0Z" fill="#ffffff"/><path d="M0.5 31.5V0.5H18" stroke="#cec5c5" fill="none"/><path d="M18 0.5L23.5 6V31.5H0" stroke="#000000" fill="none"/><path d="M17.5 0.5V6.5H23.5" fill="#dedede" stroke="#000000" stroke-width="0.8"/></g><g transform="translate(1,6) scale(0.68)"><path d="M22 5Q30 1 31 6Q31 10 27 13" stroke="#0000ff" stroke-width="2" fill="none"/><path d="M9 27Q3 32 3 27Q3 24 6 21" stroke="#0000ff" stroke-width="2" fill="none"/><path d="M8.5 17A9 7.5 0 0 1 26.5 17Z" stroke="#0000ff" stroke-width="5.5" fill="none" stroke-linejoin="round"/><path d="M8.5 17A9 8 0 0 0 25.5 23" stroke="#0000ff" stroke-width="5.5" fill="none"/><path d="M12 14.5Q17.5 9 23 14.5" stroke="#000000" stroke-width="1" fill="none" opacity="0.7"/><path d="M5.5 26Q7 13 16 7.5" stroke="#ffff00" stroke-width="2" fill="none"/><path d="M5 27Q5.5 22 7 18" stroke="#c5a500" stroke-width="1.5" fill="none"/></g></svg><svg style="position:absolute;left:981px;top:37px;" width="11" height="11" viewBox="0 0 11 11" shape-rendering="crispEdges"><rect x="0" y="0" width="11" height="11" fill="#000000"/><rect x="0" y="0" width="10" height="10" fill="#ffffff"/><path d="M4 2h5v5l-1.5-1.5z" fill="#000000" shape-rendering="auto"/><path d="M7.5 4Q3.5 5.5 3.5 8.5" stroke="#000000" stroke-width="1.9" fill="none" shape-rendering="auto"/><rect x="3" y="9" width="1" height="1" fill="#000000"/></svg><svg style="position:absolute;left:1091px;top:32px;shape-rendering:auto" width="32" height="22" viewBox="0 0 32 22" shape-rendering="crispEdges"><rect x="0.5" y="0.5" width="30" height="24" fill="#ffffff" stroke="#000000"/><rect x="1" y="1" width="29" height="4" fill="#000084"/><rect x="20" y="2" width="2" height="2" fill="#ffffff"/><rect x="23" y="2" width="2" height="2" fill="#ffffff"/><rect x="26" y="2" width="2" height="2" fill="#ffffff"/><ellipse cx="15" cy="15" rx="7" ry="4" fill="#ffff00" stroke="#848400"/><rect x="13" y="9" width="4" height="6" fill="#c5c5c5" stroke="#000000" stroke-width="0.6"/></svg><svg style="position:absolute;left:1205px;top:-1px;shape-rendering:auto" width="33" height="29" viewBox="0 0 33 29" shape-rendering="crispEdges"><path d="M1.5 4.5L3.5 0.5H13.5L15.5 4.5Z" fill="#ffff84" stroke="#dedede" stroke-width="0.8"/><rect x="0.5" y="4.5" width="31" height="22" fill="#efef7b"/><path d="M0.5 26V4.5H31" stroke="#ffffff" fill="none"/><path d="M31.5 4v23.5H0" stroke="#000000" fill="none"/><path d="M30.5 5v21.5H1" stroke="#848442" fill="none"/></svg><svg style="position:absolute;left:1205px;top:18px;" width="11" height="11" viewBox="0 0 11 11" shape-rendering="crispEdges"><rect x="0" y="0" width="11" height="11" fill="#000000"/><rect x="0" y="0" width="10" height="10" fill="#ffffff"/><path d="M4 2h5v5l-1.5-1.5z" fill="#000000" shape-rendering="auto"/><path d="M7.5 4Q3.5 5.5 3.5 8.5" stroke="#000000" stroke-width="1.9" fill="none" shape-rendering="auto"/><rect x="3" y="9" width="1" height="1" fill="#000000"/></svg><div style="position:absolute;left:920px;width:600px;text-align:center;top:34px;font-size:11px;line-height:13px;color:#ffffff;font-weight:normal;letter-spacing:-0.3px;white-space:pre;">simulink doc</div><div style="position:absolute;left:920px;width:600px;text-align:center;top:47px;font-size:11px;line-height:13px;color:#ffffff;font-weight:normal;letter-spacing:-0.3px;white-space:pre;">sandbox</div><svg style="position:absolute;left:1211px;top:75px;shape-rendering:auto" width="32" height="32" viewBox="0 0 32 32" shape-rendering="crispEdges"><g transform="translate(8,0)"><path d="M0 0H18L24 6V32H0Z" fill="#ffffff"/><path d="M0.5 31.5V0.5H18" stroke="#cec5c5" fill="none"/><path d="M18 0.5L23.5 6V31.5H0" stroke="#000000" fill="none"/><path d="M17.5 0.5V6.5H23.5" fill="#dedede" stroke="#000000" stroke-width="0.8"/></g><g transform="translate(1,6) scale(0.68)"><path d="M22 5Q30 1 31 6Q31 10 27 13" stroke="#0000ff" stroke-width="2" fill="none"/><path d="M9 27Q3 32 3 27Q3 24 6 21" stroke="#0000ff" stroke-width="2" fill="none"/><path d="M8.5 17A9 7.5 0 0 1 26.5 17Z" stroke="#0000ff" stroke-width="5.5" fill="none" stroke-linejoin="round"/><path d="M8.5 17A9 8 0 0 0 25.5 23" stroke="#0000ff" stroke-width="5.5" fill="none"/><path d="M12 14.5Q17.5 9 23 14.5" stroke="#000000" stroke-width="1" fill="none" opacity="0.7"/><path d="M5.5 26Q7 13 16 7.5" stroke="#ffff00" stroke-width="2" fill="none"/><path d="M5 27Q5.5 22 7 18" stroke="#c5a500" stroke-width="1.5" fill="none"/></g></svg><svg style="position:absolute;left:1213px;top:96px;" width="11" height="11" viewBox="0 0 11 11" shape-rendering="crispEdges"><rect x="0" y="0" width="11" height="11" fill="#000000"/><rect x="0" y="0" width="10" height="10" fill="#ffffff"/><path d="M4 2h5v5l-1.5-1.5z" fill="#000000" shape-rendering="auto"/><path d="M7.5 4Q3.5 5.5 3.5 8.5" stroke="#000000" stroke-width="1.9" fill="none" shape-rendering="auto"/><rect x="3" y="9" width="1" height="1" fill="#000000"/></svg><div style="position:absolute;left:932px;width:600px;text-align:center;top:111px;font-size:11px;line-height:13px;color:#ffffff;font-weight:normal;letter-spacing:-0.3px;white-space:pre;">Web Gecko</div><svg style="position:absolute;left:1209px;top:180px;shape-rendering:auto" width="34" height="34" viewBox="0 0 34 34" shape-rendering="crispEdges"><path d="M1 5Q8 1 16 4Q24 1 31 5L29 8Q22 6 17 8Q10 6 3 9Z" fill="#ffffff" stroke="#c5c5c5" stroke-width="0.6"/><path d="M12 7Q18 6 20 10L22 22L17 30L13 28L11 18Z" fill="#a5a5a5" stroke="#636363" stroke-width="0.6"/><path d="M14 10l4 1l-1 4z" fill="#ffc500"/><path d="M15 26l-2 4M19 26l2 4" stroke="#000000" stroke-width="1.5"/></svg><svg style="position:absolute;left:1210px;top:204px;" width="11" height="11" viewBox="0 0 11 11" shape-rendering="crispEdges"><rect x="0" y="0" width="11" height="11" fill="#000000"/><rect x="0" y="0" width="10" height="10" fill="#ffffff"/><path d="M4 2h5v5l-1.5-1.5z" fill="#000000" shape-rendering="auto"/><path d="M7.5 4Q3.5 5.5 3.5 8.5" stroke="#000000" stroke-width="1.9" fill="none" shape-rendering="auto"/><rect x="3" y="9" width="1" height="1" fill="#000000"/></svg><div style="position:absolute;left:926px;width:600px;text-align:center;top:217px;font-size:11px;line-height:13px;color:#ffffff;font-weight:normal;letter-spacing:-0.3px;white-space:pre;">jde</div><svg style="position:absolute;left:1218px;top:241px;" width="31" height="28" viewBox="0 0 31 28" shape-rendering="crispEdges"><rect x="0" y="0" width="31" height="28" fill="#c5c5c5"/><rect x="0" y="0" width="30" height="1" fill="#dedede"/><rect x="0" y="0" width="1" height="27" fill="#dedede"/><rect x="30" y="0" width="1" height="28" fill="#000000"/><rect x="0" y="27" width="31" height="1" fill="#000000"/><rect x="29" y="1" width="1" height="26" fill="#848484"/><rect x="1" y="26" width="29" height="1" fill="#848484"/><rect x="2" y="2" width="27" height="4" fill="#000084"/><rect x="20" y="3" width="2" height="2" fill="#ffffff"/><rect x="23" y="3" width="2" height="2" fill="#ffffff"/><rect x="26" y="3" width="2" height="2" fill="#ffffff"/><rect x="2" y="7" width="26" height="18" fill="#848484"/><rect x="3" y="8" width="25" height="17" fill="#ffffff"/></svg><svg style="position:absolute;left:1218px;top:260px;" width="11" height="11" viewBox="0 0 11 11" shape-rendering="crispEdges"><rect x="0" y="0" width="11" height="11" fill="#000000"/><rect x="0" y="0" width="10" height="10" fill="#ffffff"/><path d="M4 2h5v5l-1.5-1.5z" fill="#000000" shape-rendering="auto"/><path d="M7.5 4Q3.5 5.5 3.5 8.5" stroke="#000000" stroke-width="1.9" fill="none" shape-rendering="auto"/><rect x="3" y="9" width="1" height="1" fill="#000000"/></svg><div style="position:absolute;left:933px;width:600px;text-align:center;top:276px;font-size:11px;line-height:13px;color:#ffffff;font-weight:normal;letter-spacing:-0.3px;white-space:pre;">French</div><svg style="position:absolute;left:1220px;top:361px;shape-rendering:auto" width="32" height="32" viewBox="0 0 32 32" shape-rendering="crispEdges"><g transform="translate(8,0)"><path d="M0 0H16L22 6V32H0Z" fill="#ffffff"/><path d="M0.5 31.5V0.5H16" stroke="#cec5c5" fill="none"/><path d="M16 0.5L21.5 6V31.5H0" stroke="#000000" fill="none"/><path d="M15.5 0.5V6.5H21.5" fill="#dedede" stroke="#000000" stroke-width="0.8"/></g><path d="M15 10q3-1 5 0v6q-2-1-5 0z" fill="#ff0000" stroke="#000000" stroke-width="0.5"/><path d="M20 10q3 1 5 0v6q-2 1-5 0z" fill="#00ad00" stroke="#000000" stroke-width="0.5"/><path d="M15 17q3-1 5 0v6q-2-1-5 0z" fill="#0000ff" stroke="#000000" stroke-width="0.5"/><path d="M20 17q3 1 5 0v6q-2 1-5 0z" fill="#ffff00" stroke="#000000" stroke-width="0.5"/><path d="M10 12h3M10 15h3M10 18h3M10 21h3" stroke="#ff0000" stroke-dasharray="1 1"/></svg><svg style="position:absolute;left:1223px;top:382px;" width="11" height="11" viewBox="0 0 11 11" shape-rendering="crispEdges"><rect x="0" y="0" width="11" height="11" fill="#000000"/><rect x="0" y="0" width="10" height="10" fill="#ffffff"/><path d="M4 2h5v5l-1.5-1.5z" fill="#000000" shape-rendering="auto"/><path d="M7.5 4Q3.5 5.5 3.5 8.5" stroke="#000000" stroke-width="1.9" fill="none" shape-rendering="auto"/><rect x="3" y="9" width="1" height="1" fill="#000000"/></svg><div style="position:absolute;left:940px;width:600px;text-align:center;top:397px;font-size:11px;line-height:13px;color:#ffffff;font-weight:normal;letter-spacing:-0.3px;white-space:pre;">Simulink Plan</div><svg style="position:absolute;left:1220px;top:450px;" width="28" height="20" viewBox="0 0 28 20" shape-rendering="crispEdges"><rect x="0" y="0" width="28" height="20" fill="#c5c5c5"/><rect x="0" y="0" width="27" height="1" fill="#dedede"/><rect x="0" y="0" width="1" height="19" fill="#dedede"/><rect x="27" y="0" width="1" height="20" fill="#000000"/><rect x="0" y="19" width="28" height="1" fill="#000000"/><rect x="26" y="1" width="1" height="18" fill="#848484"/><rect x="1" y="18" width="26" height="1" fill="#848484"/><rect x="2" y="2" width="24" height="4" fill="#000084"/><rect x="17" y="3" width="2" height="2" fill="#ffffff"/><rect x="20" y="3" width="2" height="2" fill="#ffffff"/><rect x="23" y="3" width="2" height="2" fill="#ffffff"/><rect x="2" y="7" width="23" height="10" fill="#848484"/><rect x="3" y="8" width="22" height="9" fill="#ffffff"/></svg><svg style="position:absolute;left:1216px;top:460px;shape-rendering:auto" width="20" height="22" viewBox="0 0 20 22" shape-rendering="crispEdges"><path d="M2.5 4.5h8v12h-8z" fill="#ffffff" stroke="#000000"/><path d="M6.5 1.5h8v14h-8z" fill="#ffffff" stroke="#000000"/><path d="M8 4h5M8 7h5M8 10h5M8 13h5" stroke="#0000c5"/></svg><svg style="position:absolute;left:1216px;top:474px;" width="11" height="11" viewBox="0 0 11 11" shape-rendering="crispEdges"><rect x="0" y="0" width="11" height="11" fill="#000000"/><rect x="0" y="0" width="10" height="10" fill="#ffffff"/><path d="M4 2h5v5l-1.5-1.5z" fill="#000000" shape-rendering="auto"/><path d="M7.5 4Q3.5 5.5 3.5 8.5" stroke="#000000" stroke-width="1.9" fill="none" shape-rendering="auto"/><rect x="3" y="9" width="1" height="1" fill="#000000"/></svg><div style="position:absolute;left:932px;width:600px;text-align:center;top:486px;font-size:11px;line-height:13px;color:#ffffff;font-weight:normal;letter-spacing:-0.3px;white-space:pre;">R12</div><svg style="position:absolute;left:1229px;top:507px;shape-rendering:auto" width="34" height="34" viewBox="0 0 34 34" shape-rendering="crispEdges"><path d="M8.5 1.5h17l5 5v24h-22z" fill="#e6c542" stroke="#000000"/><path d="M10 5h14M10 8h14" stroke="#846300" stroke-dasharray="1 1"/><path d="M2 13Q9 9 16 13Q23 9 30 13v12Q23 21 16 25Q9 21 2 25z" fill="#ffffff" stroke="#000000"/><path d="M16 13v12" stroke="#000000"/><path d="M5 15h8M5 18h8M19 15h8M19 18h8" stroke="#000084"/></svg><svg style="position:absolute;left:1230px;top:527px;" width="11" height="11" viewBox="0 0 11 11" shape-rendering="crispEdges"><rect x="0" y="0" width="11" height="11" fill="#000000"/><rect x="0" y="0" width="10" height="10" fill="#ffffff"/><path d="M4 2h5v5l-1.5-1.5z" fill="#000000" shape-rendering="auto"/><path d="M7.5 4Q3.5 5.5 3.5 8.5" stroke="#000000" stroke-width="1.9" fill="none" shape-rendering="auto"/><rect x="3" y="9" width="1" height="1" fill="#000000"/></svg><div style="position:absolute;left:945px;width:600px;text-align:center;top:543px;font-size:11px;line-height:13px;color:#ffffff;font-weight:normal;letter-spacing:-0.3px;white-space:pre;">S Fun</div><svg style="position:absolute;left:1203px;top:663px;shape-rendering:auto" width="32" height="32" viewBox="0 0 32 32" shape-rendering="crispEdges"><g transform="translate(8,0)"><path d="M0 0H16L22 6V32H0Z" fill="#ffffff"/><path d="M0.5 31.5V0.5H16" stroke="#cec5c5" fill="none"/><path d="M16 0.5L21.5 6V31.5H0" stroke="#000000" fill="none"/><path d="M15.5 0.5V6.5H21.5" fill="#dedede" stroke="#000000" stroke-width="0.8"/></g><path d="M15 10q3-1 5 0v6q-2-1-5 0z" fill="#ff0000" stroke="#000000" stroke-width="0.5"/><path d="M20 10q3 1 5 0v6q-2 1-5 0z" fill="#00ad00" stroke="#000000" stroke-width="0.5"/><path d="M15 17q3-1 5 0v6q-2-1-5 0z" fill="#0000ff" stroke="#000000" stroke-width="0.5"/><path d="M20 17q3 1 5 0v6q-2 1-5 0z" fill="#ffff00" stroke="#000000" stroke-width="0.5"/><path d="M10 12h3M10 15h3M10 18h3M10 21h3" stroke="#ff0000" stroke-dasharray="1 1"/></svg><svg style="position:absolute;left:1210px;top:684px;" width="11" height="11" viewBox="0 0 11 11" shape-rendering="crispEdges"><rect x="0" y="0" width="11" height="11" fill="#000000"/><rect x="0" y="0" width="10" height="10" fill="#ffffff"/><path d="M4 2h5v5l-1.5-1.5z" fill="#000000" shape-rendering="auto"/><path d="M7.5 4Q3.5 5.5 3.5 8.5" stroke="#000000" stroke-width="1.9" fill="none" shape-rendering="auto"/><rect x="3" y="9" width="1" height="1" fill="#000000"/></svg><div style="position:absolute;left:928px;width:600px;text-align:center;top:698px;font-size:11px;line-height:13px;color:#ffffff;font-weight:normal;letter-spacing:-0.3px;white-space:pre;">help plan</div><svg style="position:absolute;left:1221px;top:728px;shape-rendering:auto" width="32" height="32" viewBox="0 0 32 32" shape-rendering="crispEdges"><g transform="translate(8,0)"><path d="M0 0H18L24 6V32H0Z" fill="#ffffff"/><path d="M0.5 31.5V0.5H18" stroke="#cec5c5" fill="none"/><path d="M18 0.5L23.5 6V31.5H0" stroke="#000000" fill="none"/><path d="M17.5 0.5V6.5H23.5" fill="#dedede" stroke="#000000" stroke-width="0.8"/></g><g transform="translate(1,6) scale(0.68)"><path d="M22 5Q30 1 31 6Q31 10 27 13" stroke="#0000ff" stroke-width="2" fill="none"/><path d="M9 27Q3 32 3 27Q3 24 6 21" stroke="#0000ff" stroke-width="2" fill="none"/><path d="M8.5 17A9 7.5 0 0 1 26.5 17Z" stroke="#0000ff" stroke-width="5.5" fill="none" stroke-linejoin="round"/><path d="M8.5 17A9 8 0 0 0 25.5 23" stroke="#0000ff" stroke-width="5.5" fill="none"/><path d="M12 14.5Q17.5 9 23 14.5" stroke="#000000" stroke-width="1" fill="none" opacity="0.7"/><path d="M5.5 26Q7 13 16 7.5" stroke="#ffff00" stroke-width="2" fill="none"/><path d="M5 27Q5.5 22 7 18" stroke="#c5a500" stroke-width="1.5" fill="none"/></g></svg><svg style="position:absolute;left:1227px;top:750px;" width="11" height="11" viewBox="0 0 11 11" shape-rendering="crispEdges"><rect x="0" y="0" width="11" height="11" fill="#000000"/><rect x="0" y="0" width="10" height="10" fill="#ffffff"/><path d="M4 2h5v5l-1.5-1.5z" fill="#000000" shape-rendering="auto"/><path d="M7.5 4Q3.5 5.5 3.5 8.5" stroke="#000000" stroke-width="1.9" fill="none" shape-rendering="auto"/><rect x="3" y="9" width="1" height="1" fill="#000000"/></svg><div style="position:absolute;left:942px;width:600px;text-align:center;top:763px;font-size:11px;line-height:13px;color:#ffffff;font-weight:normal;letter-spacing:-0.3px;white-space:pre;">Simulink help</div><svg style="position:absolute;left:1232px;top:802px;shape-rendering:auto" width="33" height="29" viewBox="0 0 33 29" shape-rendering="crispEdges"><path d="M1.5 4.5L3.5 0.5H13.5L15.5 4.5Z" fill="#ffff84" stroke="#dedede" stroke-width="0.8"/><rect x="0.5" y="4.5" width="31" height="22" fill="#efef7b"/><path d="M0.5 26V4.5H31" stroke="#ffffff" fill="none"/><path d="M31.5 4v23.5H0" stroke="#000000" fill="none"/><path d="M30.5 5v21.5H1" stroke="#848442" fill="none"/></svg><svg style="position:absolute;left:1232px;top:821px;" width="11" height="11" viewBox="0 0 11 11" shape-rendering="crispEdges"><rect x="0" y="0" width="11" height="11" fill="#000000"/><rect x="0" y="0" width="10" height="10" fill="#ffffff"/><path d="M4 2h5v5l-1.5-1.5z" fill="#000000" shape-rendering="auto"/><path d="M7.5 4Q3.5 5.5 3.5 8.5" stroke="#000000" stroke-width="1.9" fill="none" shape-rendering="auto"/><rect x="3" y="9" width="1" height="1" fill="#000000"/></svg><div style="position:absolute;left:948px;width:600px;text-align:center;top:835px;font-size:11px;line-height:13px;color:#ffffff;font-weight:normal;letter-spacing:-0.3px;white-space:pre;">Simulink</div><div style="position:absolute;left:948px;width:600px;text-align:center;top:848px;font-size:11px;line-height:13px;color:#ffffff;font-weight:normal;letter-spacing:-0.3px;white-space:pre;">DocPlans</div><div style="position:absolute;left:1209px;top:847px;font-size:11px;line-height:13px;color:#ffffff;font-weight:normal;letter-spacing:0px;white-space:pre;">s</div><svg style="position:absolute;left:1160px;top:506px;" width="30" height="6" viewBox="0 0 30 6" shape-rendering="crispEdges"><rect x="0" y="0" width="30" height="6" fill="#ffffff"/><rect x="4" y="2" width="6" height="2" fill="#000000"/><rect x="16" y="2" width="6" height="2" fill="#000000"/><rect x="28" y="0" width="2" height="6" fill="#ffff00"/></svg><div style="position:absolute;left:53px;top:53px;width:391px;height:918px;background:#c5c5c5;box-shadow:inset -1px -1px #000000,inset 1px 1px #dedede,inset -2px -2px #848484,inset 2px 2px #ffffff;"></div><div style="position:absolute;left:57px;top:57px;width:383px;height:18px;background:#848484;"></div><svg style="position:absolute;left:57px;top:57px" width="20" height="18" viewBox="57 57 20 18" shape-rendering="crispEdges"><rect x="60" y="67" width="6" height="6" fill="#ffffff"/><path d="M60 73.5h7M66.5 69v5" stroke="#000000"/><rect x="67" y="60" width="2" height="5" fill="#ffffff"/><path d="M63 64h4v1h1v4h-1v1h-4v-1h-1v-4h1z" fill="#00ffff" stroke="#000000" stroke-width="1" shape-rendering="auto"/><path d="M69 63h2v2h1v-3h1v-2h1v2h-1v3h-1v2h3v1h-6z" fill="#000084"/><rect x="70" y="60" width="2" height="2" fill="#ffffff"/><path d="M70 59.5h2" stroke="#000000"/><path d="M69 70h3l2 2v1h-1l-2-1h-2z" fill="#0000ff"/><path d="M70 71h2l1 1" stroke="#00ffff"/></svg><div style="position:absolute;left:78px;top:59px;font-size:13px;line-height:15px;color:#c5c5c5;font-weight:bold;letter-spacing:0.8px;white-space:pre;">Model Differencing Tool</div><div style="position:absolute;left:422px;top:59px;width:16px;height:14px;background:#c5c5c5;box-shadow:inset -1px -1px #000000,inset 1px 1px #ffffff,inset -2px -2px #848484,inset 2px 2px #dedede;"></div><svg style="position:absolute;left:422px;top:59px;" width="16" height="14" viewBox="0 0 16 14" shape-rendering="crispEdges"><path d="M4 3h2v1h1v1h2v-1h1v-1h2v1h-1v1h-1v1h-1v1h1v1h1v1h1v1h-2v-1h-1v-1h-2v1h-1v1h-2v-1h1v-1h1v-1h1v-1h-1v-1h-1v-1h-1z" fill="#000000"/></svg><div style="position:absolute;left:404px;top:59px;width:16px;height:14px;background:#c5c5c5;box-shadow:inset -1px -1px #000000,inset 1px 1px #ffffff,inset -2px -2px #848484,inset 2px 2px #dedede;"></div><svg style="position:absolute;left:404px;top:59px;" width="16" height="14" viewBox="0 0 16 14" shape-rendering="crispEdges"><path d="M3 2h9v9h-9z M4 4v6h7v-6z" fill="#000000" fill-rule="evenodd"/></svg><div style="position:absolute;left:388px;top:59px;width:16px;height:14px;background:#c5c5c5;box-shadow:inset -1px -1px #000000,inset 1px 1px #ffffff,inset -2px -2px #848484,inset 2px 2px #dedede;"></div><svg style="position:absolute;left:388px;top:59px;" width="16" height="14" viewBox="0 0 16 14" shape-rendering="crispEdges"><rect x="4" y="9" width="6" height="2" fill="#000000"/></svg><div style="position:absolute;left:66px;top:77px;font-size:13px;line-height:15px;color:#000000;font-weight:normal;letter-spacing:0px;white-space:pre;">File</div><div style="position:absolute;left:103px;top:77px;font-size:13px;line-height:15px;color:#000000;font-weight:normal;letter-spacing:0px;white-space:pre;">View</div><div style="position:absolute;left:148px;top:77px;font-size:13px;line-height:15px;color:#000000;font-weight:normal;letter-spacing:0px;white-space:pre;">Option</div><div style="position:absolute;left:57px;top:95px;width:383px;height:1px;background:#ffffff;"></div><svg style="position:absolute;left:57px;top:97px" width="150" height="26" viewBox="57 97 150 26"><g fill="#ff0000" shape-rendering="crispEdges"><rect x="66" y="108" width="7" height="1"/><rect x="69" y="105" width="1" height="7"/><rect x="67" y="106" width="1" height="1"/><rect x="68" y="107" width="1" height="1"/><rect x="70" y="109" width="1" height="1"/><rect x="71" y="110" width="1" height="1"/><rect x="71" y="106" width="1" height="1"/><rect x="70" y="107" width="1" height="1"/><rect x="68" y="109" width="1" height="1"/><rect x="67" y="110" width="1" height="1"/></g><path d="M73.5 102.5h6l2.5 2.5v7.5h-8.5z" fill="#dee6ff" stroke="#000000"/><path d="M74 103h5v9h-5z" fill="#ffffff"/><path d="M79 108l2-3v7h-3z" fill="#a5b5ff"/><path d="M69.5 110.5h6l2 2v5h-8z" fill="#ffffd6" stroke="#000000"/><path d="M71 113l1 1M73 115l1 1M71 116l1-1" stroke="#e6e684"/><path d="M108 102L116 110H112V117H103V110H100Z" fill="#008400"/><path d="M112 110V117H105Z" fill="#ffff00"/><path d="M130.5 117L138 109H135V102H126V109H123Z" fill="#008400"/><path d="M126 102H133L126 109Z" fill="#ffff00"/><path d="M157.5 102.5h8l3.5 3.5v11.5h-11.5z" fill="#ffffef" stroke="#000000"/><path d="M165.5 102.5v3.5h3.5" fill="none" stroke="#000000"/><path d="M160 110a3.5 3.5 0 0 1 6-2.5" stroke="#008400" stroke-width="1.6" fill="none"/><path d="M167 106v3h-3z" fill="#008400"/><path d="M166 112a3.5 3.5 0 0 1-6 2.5" stroke="#00a500" stroke-width="1.6" fill="none"/><path d="M159 116v-3h3z" fill="#00a500"/><path d="M192 107.5q0-3.5 4-3.5q4 0 4 3q0 2-2.5 3.2q-1.5 0.8-1.5 2.3" stroke="#000000" stroke-width="3.6" fill="none"/><rect x="194" y="114" width="3.5" height="3" fill="#000000" stroke="#000000" stroke-width="1.4"/><path d="M192 107.5q0-3.5 4-3.5q4 0 4 3q0 2-2.5 3.2q-1.5 0.8-1.5 2.3" stroke="#ffff00" stroke-width="1.5" fill="none"/><rect x="194.5" y="114.5" width="2.5" height="2" fill="#ffff00"/></svg><div style="position:absolute;left:90px;top:99px;width:1px;height:22px;background:#848484;"></div><div style="position:absolute;left:91px;top:99px;width:1px;height:22px;background:#ffffff;"></div><div style="position:absolute;left:147px;top:99px;width:1px;height:22px;background:#848484;"></div><div style="position:absolute;left:148px;top:99px;width:1px;height:22px;background:#ffffff;"></div><div style="position:absolute;left:178px;top:99px;width:1px;height:22px;background:#848484;"></div><div style="position:absolute;left:179px;top:99px;width:1px;height:22px;background:#ffffff;"></div><div style="position:absolute;left:57px;top:124px;width:164px;height:24px;background:#ffffff;box-shadow:inset 1px 1px #848484,inset -1px -1px #ffffff,inset 2px 2px #000000,inset -2px -2px #dedede;"></div><div style="position:absolute;left:60px;top:129px;font-size:12px;line-height:14px;color:#000000;font-weight:normal;letter-spacing:0.25px;white-space:pre;">s\simgeneral\vdp.mdl</div><div style="position:absolute;left:251px;top:124px;width:164px;height:24px;background:#ffffff;box-shadow:inset 1px 1px #848484,inset -1px -1px #ffffff,inset 2px 2px #000000,inset -2px -2px #dedede;"></div><div style="position:absolute;left:254px;top:129px;font-size:12px;line-height:14px;color:#000000;font-weight:normal;letter-spacing:0.25px;white-space:pre;">H:\Documents\paul\vdp1.mdl</div><div style="position:absolute;left:221px;top:125px;width:24px;height:24px;background:#c5c5c5;box-shadow:inset -1px -1px #000000,inset 1px 1px #ffffff,inset -2px -2px #848484,inset 2px 2px #dedede;"></div><svg style="position:absolute;left:225px;top:129px;shape-rendering:auto" width="16" height="14" viewBox="0 0 16 14" shape-rendering="crispEdges"><path d="M1 3h4l1 1h4v9H1z" fill="#ffff00" stroke="#000000"/><path d="M1 13l3-6h11l-4 6z" fill="#848400" stroke="#000000"/><path d="M9 2q3-2 5 1" stroke="#000000" fill="none"/><path d="M13 2l1 2l2-2" fill="#000000"/></svg><div style="position:absolute;left:415px;top:125px;width:24px;height:24px;background:#c5c5c5;box-shadow:inset -1px -1px #000000,inset 1px 1px #ffffff,inset -2px -2px #848484,inset 2px 2px #dedede;"></div><svg style="position:absolute;left:419px;top:129px;shape-rendering:auto" width="16" height="14" viewBox="0 0 16 14" shape-rendering="crispEdges"><path d="M1 3h4l1 1h4v9H1z" fill="#ffff00" stroke="#000000"/><path d="M1 13l3-6h11l-4 6z" fill="#848400" stroke="#000000"/><path d="M9 2q3-2 5 1" stroke="#000000" fill="none"/><path d="M13 2l1 2l2-2" fill="#000000"/></svg><div style="position:absolute;left:57px;top:149px;width:188px;height:589px;background:#ffffff;box-shadow:inset 1px 1px #848484,inset -1px -1px #ffffff,inset 2px 2px #000000,inset -2px -2px #dedede;"></div><div style="position:absolute;left:59px;top:151px;width:184px;height:19px;background:#c5c5c5;box-shadow:inset -1px -1px #848484,inset 1px 1px #ffffff;"></div><div style="position:absolute;left:59px;top:170px;width:184px;height:1px;background:#000000;"></div><div style="position:absolute;left:67px;top:177px;width:9px;height:9px;background:#ffffff;border:1px solid #848484;box-sizing:border-box;"></div><div style="position:absolute;left:69px;top:181px;width:5px;height:1px;background:#000000;"></div><div style="position:absolute;left:76px;top:181px;width:7px;height:1px;background:#848484;"></div><svg style="position:absolute;left:86px;top:174px;" width="16" height="16" viewBox="0 0 16 16" shape-rendering="crispEdges"><rect x="1" y="0" width="15" height="15" fill="#c5c5c5"/><rect x="1" y="0" width="15" height="1" fill="#ffffff"/><rect x="1" y="0" width="1" height="15" fill="#ffffff"/><rect x="15" y="0" width="1" height="1" fill="#00ffff"/><rect x="1" y="14" width="1" height="1" fill="#00ffff"/><path d="M2 2L9 6.5L2 11Z" fill="#008400" shape-rendering="auto"/><rect x="6" y="6" width="9" height="4" fill="#0000ff"/><circle cx="7" cy="10.5" r="3.6" fill="#ff0000" shape-rendering="auto"/><rect x="2" y="2" width="11" height="1" fill="#000000"/><rect x="12" y="2" width="1" height="12" fill="#000000"/><path d="M10 11h5l-2.5 3z" fill="#000000" shape-rendering="auto"/><rect x="7" y="8" width="1" height="3" fill="#000000"/><rect x="7" y="10" width="3" height="1" fill="#000000"/></svg><div style="position:absolute;left:104px;top:174px;font-size:12px;line-height:14px;color:#ff0000;font-weight:normal;letter-spacing:0px;white-space:pre;">vdp</div><div style="position:absolute;left:95px;top:189px;width:1px;height:233px;background:#848484;"></div><div style="position:absolute;left:95px;top:201px;width:11px;height:1px;background:#848484;"></div><svg style="position:absolute;left:109px;top:193px;shape-rendering:auto" width="16" height="16" viewBox="0 0 16 16" shape-rendering="crispEdges"><rect x="0.5" y="0.5" width="15" height="15" fill="#ffffff" stroke="#cecece"/><path d="M3 3l3 2l-3 2M3 8h5l2-2h4M8 8v3h-5" stroke="#cecece" fill="none"/><circle cx="9" cy="8" r="2" fill="#ffffff" stroke="#cecece"/></svg><div style="position:absolute;left:129px;top:196px;font-size:11.5px;line-height:13px;color:#c5c5c5;font-weight:normal;letter-spacing:0px;white-space:pre;">More Info</div><div style="position:absolute;left:95px;top:221px;width:11px;height:1px;background:#848484;"></div><svg style="position:absolute;left:109px;top:213px;shape-rendering:auto" width="16" height="16" viewBox="0 0 16 16" shape-rendering="crispEdges"><rect x="0.5" y="0.5" width="15" height="15" fill="#ffffff" stroke="#cecece"/><path d="M3 3l3 2l-3 2M3 8h5l2-2h4M8 8v3h-5" stroke="#cecece" fill="none"/><circle cx="9" cy="8" r="2" fill="#ffffff" stroke="#cecece"/></svg><div style="position:absolute;left:129px;top:216px;font-size:11.5px;line-height:13px;color:#c5c5c5;font-weight:normal;letter-spacing:0px;white-space:pre;">More Info3</div><div style="position:absolute;left:95px;top:241px;width:11px;height:1px;background:#848484;"></div><svg style="position:absolute;left:111px;top:232px;shape-rendering:auto" width="12" height="16" viewBox="0 0 12 16" shape-rendering="crispEdges"><path d="M6 1l5 5v5l-5 5l-5-5v-5z M1 6l5 5l5-5" fill="none" stroke="#63cead"/></svg><div style="position:absolute;left:129px;top:236px;font-size:11.5px;line-height:13px;color:#c5c5c5;font-weight:normal;letter-spacing:0px;white-space:pre;">Fcn</div><div style="position:absolute;left:95px;top:261px;width:11px;height:1px;background:#848484;"></div><svg style="position:absolute;left:111px;top:252px;shape-rendering:auto" width="12" height="16" viewBox="0 0 12 16" shape-rendering="crispEdges"><path d="M6 1l5 5v5l-5 5l-5-5v-5z M1 6l5 5l5-5" fill="none" stroke="#63cead"/></svg><div style="position:absolute;left:129px;top:256px;font-size:11.5px;line-height:13px;color:#c5c5c5;font-weight:normal;letter-spacing:0px;white-space:pre;">Mu</div><div style="position:absolute;left:95px;top:281px;width:11px;height:1px;background:#848484;"></div><svg style="position:absolute;left:111px;top:272px;shape-rendering:auto" width="12" height="16" viewBox="0 0 12 16" shape-rendering="crispEdges"><path d="M6 1l5 5v5l-5 5l-5-5v-5z M1 6l5 5l5-5" fill="none" stroke="#63cead"/></svg><div style="position:absolute;left:129px;top:276px;font-size:11.5px;line-height:13px;color:#c5c5c5;font-weight:normal;letter-spacing:0px;white-space:pre;">Mux</div><div style="position:absolute;left:95px;top:301px;width:11px;height:1px;background:#848484;"></div><svg style="position:absolute;left:111px;top:292px;shape-rendering:auto" width="12" height="16" viewBox="0 0 12 16" shape-rendering="crispEdges"><path d="M6 1l5 5v5l-5 5l-5-5v-5z M1 6l5 5l5-5" fill="none" stroke="#63cead"/></svg><div style="position:absolute;left:129px;top:296px;font-size:11.5px;line-height:13px;color:#c5c5c5;font-weight:normal;letter-spacing:0px;white-space:pre;">Product</div><div style="position:absolute;left:95px;top:321px;width:11px;height:1px;background:#848484;"></div><svg style="position:absolute;left:111px;top:312px;shape-rendering:auto" width="12" height="16" viewBox="0 0 12 16" shape-rendering="crispEdges"><path d="M6 1l5 5v5l-5 5l-5-5v-5z M1 6l5 5l5-5" fill="none" stroke="#63cead"/></svg><div style="position:absolute;left:129px;top:316px;font-size:11.5px;line-height:13px;color:#c5c5c5;font-weight:normal;letter-spacing:0px;white-space:pre;">Scope</div><div style="position:absolute;left:95px;top:341px;width:11px;height:1px;background:#848484;"></div><svg style="position:absolute;left:111px;top:332px;shape-rendering:auto" width="12" height="16" viewBox="0 0 12 16" shape-rendering="crispEdges"><path d="M6 1l5 5v5l-5 5l-5-5v-5z M1 6l5 5l5-5" fill="none" stroke="#63cead"/></svg><div style="position:absolute;left:129px;top:336px;font-size:11.5px;line-height:13px;color:#c5c5c5;font-weight:normal;letter-spacing:0px;white-space:pre;">Sum</div><div style="position:absolute;left:95px;top:361px;width:11px;height:1px;background:#848484;"></div><svg style="position:absolute;left:111px;top:352px;shape-rendering:auto" width="12" height="16" viewBox="0 0 12 16" shape-rendering="crispEdges"><path d="M6 1l5 5v5l-5 5l-5-5v-5z M1 6l5 5l5-5" fill="none" stroke="#63cead"/></svg><div style="position:absolute;left:129px;top:356px;font-size:11.5px;line-height:13px;color:#c5c5c5;font-weight:normal;letter-spacing:0px;white-space:pre;">x1</div><div style="position:absolute;left:95px;top:381px;width:11px;height:1px;background:#848484;"></div><svg style="position:absolute;left:111px;top:372px;shape-rendering:auto" width="12" height="16" viewBox="0 0 12 16" shape-rendering="crispEdges"><path d="M6 1l5 5v5l-5 5l-5-5v-5z M1 6l5 5l5-5" fill="none" stroke="#63cead"/></svg><div style="position:absolute;left:129px;top:376px;font-size:11.5px;line-height:13px;color:#c5c5c5;font-weight:normal;letter-spacing:0px;white-space:pre;">x2</div><div style="position:absolute;left:95px;top:401px;width:11px;height:1px;background:#848484;"></div><svg style="position:absolute;left:111px;top:392px;shape-rendering:auto" width="12" height="16" viewBox="0 0 12 16" shape-rendering="crispEdges"><path d="M6 1l5 5v5l-5 5l-5-5v-5z M1 6l5 5l5-5" fill="none" stroke="#63cead"/></svg><div style="position:absolute;left:129px;top:396px;font-size:11.5px;line-height:13px;color:#c5c5c5;font-weight:normal;letter-spacing:0px;white-space:pre;">Out1</div><div style="position:absolute;left:95px;top:421px;width:11px;height:1px;background:#848484;"></div><svg style="position:absolute;left:111px;top:412px;shape-rendering:auto" width="12" height="16" viewBox="0 0 12 16" shape-rendering="crispEdges"><path d="M6 1l5 5v5l-5 5l-5-5v-5z M1 6l5 5l5-5" fill="none" stroke="#63cead"/></svg><div style="position:absolute;left:129px;top:416px;font-size:11.5px;line-height:13px;color:#c5c5c5;font-weight:normal;letter-spacing:0px;white-space:pre;">Out2</div><div style="position:absolute;left:251px;top:149px;width:189px;height:589px;background:#ffffff;box-shadow:inset 1px 1px #848484,inset -1px -1px #ffffff,inset 2px 2px #000000,inset -2px -2px #dedede;"></div><div style="position:absolute;left:253px;top:151px;width:185px;height:19px;background:#c5c5c5;box-shadow:inset -1px -1px #848484,inset 1px 1px #ffffff;"></div><div style="position:absolute;left:253px;top:170px;width:185px;height:1px;background:#000000;"></div><div style="position:absolute;left:261px;top:177px;width:9px;height:9px;background:#ffffff;border:1px solid #848484;box-sizing:border-box;"></div><div style="position:absolute;left:263px;top:181px;width:5px;height:1px;background:#000000;"></div><div style="position:absolute;left:270px;top:181px;width:7px;height:1px;background:#848484;"></div><svg style="position:absolute;left:280px;top:174px;" width="16" height="16" viewBox="0 0 16 16" shape-rendering="crispEdges"><rect x="1" y="0" width="15" height="15" fill="#c5c5c5"/><rect x="1" y="0" width="15" height="1" fill="#ffffff"/><rect x="1" y="0" width="1" height="15" fill="#ffffff"/><rect x="15" y="0" width="1" height="1" fill="#00ffff"/><rect x="1" y="14" width="1" height="1" fill="#00ffff"/><path d="M2 2L9 6.5L2 11Z" fill="#008400" shape-rendering="auto"/><rect x="6" y="6" width="9" height="4" fill="#0000ff"/><circle cx="7" cy="10.5" r="3.6" fill="#ff0000" shape-rendering="auto"/><rect x="2" y="2" width="11" height="1" fill="#000000"/><rect x="12" y="2" width="1" height="12" fill="#000000"/><path d="M10 11h5l-2.5 3z" fill="#000000" shape-rendering="auto"/><rect x="7" y="8" width="1" height="3" fill="#000000"/><rect x="7" y="10" width="3" height="1" fill="#000000"/></svg><div style="position:absolute;left:298px;top:174px;font-size:12px;line-height:14px;color:#ff0000;font-weight:normal;letter-spacing:0px;white-space:pre;">vdp1</div><div style="position:absolute;left:289px;top:189px;width:1px;height:253px;background:#848484;"></div><div style="position:absolute;left:289px;top:201px;width:11px;height:1px;background:#848484;"></div><svg style="position:absolute;left:303px;top:193px;shape-rendering:auto" width="16" height="16" viewBox="0 0 16 16" shape-rendering="crispEdges"><rect x="0.5" y="0.5" width="15" height="15" fill="#ffffff" stroke="#cecece"/><path d="M3 3l3 2l-3 2M3 8h5l2-2h4M8 8v3h-5" stroke="#cecece" fill="none"/><circle cx="9" cy="8" r="2" fill="#ffffff" stroke="#cecece"/></svg><div style="position:absolute;left:323px;top:196px;font-size:11.5px;line-height:13px;color:#c5c5c5;font-weight:normal;letter-spacing:0px;white-space:pre;">More Info</div><div style="position:absolute;left:289px;top:221px;width:11px;height:1px;background:#848484;"></div><svg style="position:absolute;left:303px;top:213px;shape-rendering:auto" width="16" height="16" viewBox="0 0 16 16" shape-rendering="crispEdges"><rect x="0.5" y="0.5" width="15" height="15" fill="#ffffff" stroke="#cecece"/><path d="M3 3l3 2l-3 2M3 8h5l2-2h4M8 8v3h-5" stroke="#cecece" fill="none"/><circle cx="9" cy="8" r="2" fill="#ffffff" stroke="#cecece"/></svg><div style="position:absolute;left:323px;top:216px;font-size:11.5px;line-height:13px;color:#c5c5c5;font-weight:normal;letter-spacing:0px;white-space:pre;">More Info3</div><div style="position:absolute;left:289px;top:241px;width:11px;height:1px;background:#848484;"></div><svg style="position:absolute;left:305px;top:232px;shape-rendering:auto" width="12" height="16" viewBox="0 0 12 16" shape-rendering="crispEdges"><path d="M6 1l5 5v5l-5 5l-5-5v-5z M1 6l5 5l5-5" fill="none" stroke="#63cead"/></svg><div style="position:absolute;left:323px;top:236px;font-size:11.5px;line-height:13px;color:#c5c5c5;font-weight:normal;letter-spacing:0px;white-space:pre;">Fcn</div><div style="position:absolute;left:289px;top:261px;width:11px;height:1px;background:#848484;"></div><svg style="position:absolute;left:305px;top:252px;shape-rendering:auto" width="12" height="16" viewBox="0 0 12 16" shape-rendering="crispEdges"><path d="M6 1l5 5v5l-5 5l-5-5v-5z M1 6l5 5l5-5" fill="none" stroke="#63cead"/></svg><div style="position:absolute;left:323px;top:256px;font-size:11.5px;line-height:13px;color:#c5c5c5;font-weight:normal;letter-spacing:0px;white-space:pre;">Mu</div><div style="position:absolute;left:289px;top:281px;width:11px;height:1px;background:#848484;"></div><svg style="position:absolute;left:305px;top:272px;shape-rendering:auto" width="12" height="16" viewBox="0 0 12 16" shape-rendering="crispEdges"><path d="M6 1l5 5v5l-5 5l-5-5v-5z M1 6l5 5l5-5" fill="none" stroke="#63cead"/></svg><div style="position:absolute;left:323px;top:276px;font-size:11.5px;line-height:13px;color:#c5c5c5;font-weight:normal;letter-spacing:0px;white-space:pre;">Mux</div><div style="position:absolute;left:289px;top:301px;width:11px;height:1px;background:#848484;"></div><svg style="position:absolute;left:305px;top:292px;shape-rendering:auto" width="12" height="16" viewBox="0 0 12 16" shape-rendering="crispEdges"><path d="M6 1l5 5v5l-5 5l-5-5v-5z M1 6l5 5l5-5" fill="none" stroke="#63cead"/></svg><div style="position:absolute;left:323px;top:296px;font-size:11.5px;line-height:13px;color:#c5c5c5;font-weight:normal;letter-spacing:0px;white-space:pre;">Product</div><div style="position:absolute;left:289px;top:321px;width:11px;height:1px;background:#848484;"></div><svg style="position:absolute;left:305px;top:312px;shape-rendering:auto" width="12" height="16" viewBox="0 0 12 16" shape-rendering="crispEdges"><path d="M6 1l5 5v5l-5 5l-5-5v-5z M1 6l5 5l5-5" fill="none" stroke="#63cead"/></svg><div style="position:absolute;left:323px;top:316px;font-size:11.5px;line-height:13px;color:#c5c5c5;font-weight:normal;letter-spacing:0px;white-space:pre;">Scope</div><div style="position:absolute;left:289px;top:341px;width:11px;height:1px;background:#848484;"></div><svg style="position:absolute;left:305px;top:332px;shape-rendering:auto" width="12" height="16" viewBox="0 0 12 16" shape-rendering="crispEdges"><path d="M6 1l5 5v5l-5 5l-5-5v-5z M1 6l5 5l5-5" fill="none" stroke="#63cead"/></svg><div style="position:absolute;left:323px;top:336px;font-size:11.5px;line-height:13px;color:#c5c5c5;font-weight:normal;letter-spacing:0px;white-space:pre;">Sum</div><div style="position:absolute;left:289px;top:361px;width:11px;height:1px;background:#848484;"></div><svg style="position:absolute;left:305px;top:352px;shape-rendering:auto" width="12" height="16" viewBox="0 0 12 16" shape-rendering="crispEdges"><path d="M6 1l5 5v5l-5 5l-5-5v-5z M1 6l5 5l5-5" fill="none" stroke="#63cead"/></svg><div style="position:absolute;left:323px;top:356px;font-size:11.5px;line-height:13px;color:#c5c5c5;font-weight:normal;letter-spacing:0px;white-space:pre;">x1</div><div style="position:absolute;left:289px;top:381px;width:11px;height:1px;background:#848484;"></div><svg style="position:absolute;left:305px;top:372px;shape-rendering:auto" width="12" height="16" viewBox="0 0 12 16" shape-rendering="crispEdges"><path d="M6 1l5 5v5l-5 5l-5-5v-5z M1 6l5 5l5-5" fill="none" stroke="#63cead"/></svg><div style="position:absolute;left:323px;top:376px;font-size:11.5px;line-height:13px;color:#c5c5c5;font-weight:normal;letter-spacing:0px;white-space:pre;">x2</div><div style="position:absolute;left:289px;top:401px;width:11px;height:1px;background:#848484;"></div><svg style="position:absolute;left:305px;top:392px;shape-rendering:auto" width="12" height="16" viewBox="0 0 12 16" shape-rendering="crispEdges"><path d="M6 1l5 5v5l-5 5l-5-5v-5z M1 6l5 5l5-5" fill="none" stroke="#63cead"/></svg><div style="position:absolute;left:323px;top:396px;font-size:11.5px;line-height:13px;color:#c5c5c5;font-weight:normal;letter-spacing:0px;white-space:pre;">Out1</div><div style="position:absolute;left:289px;top:421px;width:11px;height:1px;background:#848484;"></div><svg style="position:absolute;left:305px;top:412px;shape-rendering:auto" width="12" height="16" viewBox="0 0 12 16" shape-rendering="crispEdges"><path d="M6 1l5 5v5l-5 5l-5-5v-5z M1 6l5 5l5-5" fill="none" stroke="#63cead"/></svg><div style="position:absolute;left:323px;top:416px;font-size:11.5px;line-height:13px;color:#c5c5c5;font-weight:normal;letter-spacing:0px;white-space:pre;">Out2</div><div style="position:absolute;left:289px;top:441px;width:11px;height:1px;background:#848484;"></div><svg style="position:absolute;left:301px;top:432px;shape-rendering:auto" width="13" height="17" viewBox="0 0 13 17" shape-rendering="crispEdges"><path d="M6.5 1L12 6.5L6.5 12L1 6.5Z" fill="#cec5bd"/><path d="M1 6.5L6.5 12L12 6.5V11L6.5 16.5L1 11Z" fill="#008484"/><path d="M6.5 1L12 6.5V11L6.5 16.5L1 11V6.5Z" fill="none" stroke="#008484" stroke-width="0.8"/></svg><div style="position:absolute;left:318px;top:435px;font-size:12px;line-height:14px;color:#0000ff;font-weight:normal;letter-spacing:0px;white-space:pre;">Display</div><div style="position:absolute;left:57px;top:746px;font-size:12px;line-height:14px;color:#000000;font-weight:normal;letter-spacing:0.1px;white-space:pre;">Parameter differences:</div><div style="position:absolute;left:188px;top:751px;width:1px;height:4px;background:#000000;"></div><div style="position:absolute;left:191px;top:751px;width:1px;height:4px;background:#000000;"></div><div style="position:absolute;left:57px;top:768px;width:383px;height:181px;background:#ffffff;box-shadow:inset 1px 1px #848484,inset -1px -1px #ffffff,inset 2px 2px #000000,inset -2px -2px #dedede;"></div><div style="position:absolute;left:59px;top:770px;width:100px;height:20px;background:#c5c5c5;box-shadow:inset -1px -1px #000000,inset 1px 1px #ffffff;"></div><div style="position:absolute;left:-191px;width:600px;text-align:center;top:774px;font-size:12px;line-height:14px;color:#000000;font-weight:normal;letter-spacing:0px;white-space:pre;">Parameter</div><div style="position:absolute;left:159px;top:770px;width:100px;height:20px;background:#c5c5c5;box-shadow:inset -1px -1px #000000,inset 1px 1px #ffffff;"></div><div style="position:absolute;left:-91px;width:600px;text-align:center;top:774px;font-size:12px;line-height:14px;color:#000000;font-weight:normal;letter-spacing:0px;white-space:pre;">Model one</div><div style="position:absolute;left:259px;top:770px;width:179px;height:20px;background:#c5c5c5;box-shadow:inset -1px -1px #000000,inset 1px 1px #ffffff;"></div><div style="position:absolute;left:48px;width:600px;text-align:center;top:774px;font-size:12px;line-height:14px;color:#000000;font-weight:normal;letter-spacing:0px;white-space:pre;">Model two</div><div style="position:absolute;left:57px;top:949px;width:23px;height:18px;box-shadow:inset 1px 1px #848484,inset -1px -1px #ffffff;"></div><div style="position:absolute;left:81px;top:949px;width:359px;height:18px;box-shadow:inset 1px 1px #848484,inset -1px -1px #ffffff;"></div><div style="position:absolute;left:86px;top:952px;font-size:12px;line-height:14px;color:#000000;font-weight:normal;letter-spacing:0.2px;white-space:pre;">Ready</div><div style="position:absolute;left:446px;top:52px;width:764px;height:457px;background:#c5c5c5;box-shadow:inset -1px -1px #000000,inset 1px 1px #dedede,inset -2px -2px #848484,inset 2px 2px #ffffff;"></div><div style="position:absolute;left:450px;top:56px;width:756px;height:18px;background:#848484;"></div><svg style="position:absolute;left:451px;top:57px;" width="16" height="16" viewBox="0 0 16 16" shape-rendering="crispEdges"><rect x="1" y="0" width="15" height="15" fill="#c5c5c5"/><rect x="1" y="0" width="15" height="1" fill="#ffffff"/><rect x="1" y="0" width="1" height="15" fill="#ffffff"/><rect x="15" y="0" width="1" height="1" fill="#00ffff"/><rect x="1" y="14" width="1" height="1" fill="#00ffff"/><path d="M2 2L9 6.5L2 11Z" fill="#008400" shape-rendering="auto"/><rect x="6" y="6" width="9" height="4" fill="#0000ff"/><circle cx="7" cy="10.5" r="3.6" fill="#ff0000" shape-rendering="auto"/><rect x="2" y="2" width="11" height="1" fill="#000000"/><rect x="12" y="2" width="1" height="12" fill="#000000"/><path d="M10 11h5l-2.5 3z" fill="#000000" shape-rendering="auto"/><rect x="7" y="8" width="1" height="3" fill="#000000"/><rect x="7" y="10" width="3" height="1" fill="#000000"/></svg><div style="position:absolute;left:470px;top:58px;font-size:13px;line-height:15px;color:#c5c5c5;font-weight:bold;letter-spacing:0.8px;white-space:pre;">vdp</div><div style="position:absolute;left:1188px;top:58px;width:16px;height:14px;background:#c5c5c5;box-shadow:inset -1px -1px #000000,inset 1px 1px #ffffff,inset -2px -2px #848484,inset 2px 2px #dedede;"></div><svg style="position:absolute;left:1188px;top:58px;" width="16" height="14" viewBox="0 0 16 14" shape-rendering="crispEdges"><path d="M4 3h2v1h1v1h2v-1h1v-1h2v1h-1v1h-1v1h-1v1h1v1h1v1h1v1h-2v-1h-1v-1h-2v1h-1v1h-2v-1h1v-1h1v-1h1v-1h-1v-1h-1v-1h-1z" fill="#000000"/></svg><div style="position:absolute;left:1170px;top:58px;width:16px;height:14px;background:#c5c5c5;box-shadow:inset -1px -1px #000000,inset 1px 1px #ffffff,inset -2px -2px #848484,inset 2px 2px #dedede;"></div><svg style="position:absolute;left:1170px;top:58px;" width="16" height="14" viewBox="0 0 16 14" shape-rendering="crispEdges"><path d="M3 2h9v9h-9z M4 4v6h7v-6z" fill="#000000" fill-rule="evenodd"/></svg><div style="position:absolute;left:1154px;top:58px;width:16px;height:14px;background:#c5c5c5;box-shadow:inset -1px -1px #000000,inset 1px 1px #ffffff,inset -2px -2px #848484,inset 2px 2px #dedede;"></div><svg style="position:absolute;left:1154px;top:58px;" width="16" height="14" viewBox="0 0 16 14" shape-rendering="crispEdges"><rect x="4" y="9" width="6" height="2" fill="#000000"/></svg><div style="position:absolute;left:459px;top:76px;font-size:13px;line-height:15px;color:#000000;font-weight:normal;letter-spacing:0px;white-space:pre;">File</div><div style="position:absolute;left:459px;top:76px;font-size:13px;line-height:15px;white-space:pre;color:transparent;"><span style="text-decoration:underline;text-decoration-color:#000000;text-underline-offset:1px;">F</span></div><div style="position:absolute;left:496px;top:76px;font-size:13px;line-height:15px;color:#000000;font-weight:normal;letter-spacing:0px;white-space:pre;">Edit</div><div style="position:absolute;left:496px;top:76px;font-size:13px;line-height:15px;white-space:pre;color:transparent;"><span style="text-decoration:underline;text-decoration-color:#000000;text-underline-offset:1px;">E</span></div><div style="position:absolute;left:535px;top:76px;font-size:13px;line-height:15px;color:#000000;font-weight:normal;letter-spacing:0px;white-space:pre;">View</div><div style="position:absolute;left:535px;top:76px;font-size:13px;line-height:15px;white-space:pre;color:transparent;"><span style="text-decoration:underline;text-decoration-color:#000000;text-underline-offset:1px;">V</span></div><div style="position:absolute;left:580px;top:76px;font-size:13px;line-height:15px;color:#000000;font-weight:normal;letter-spacing:0px;white-space:pre;">Simulation</div><div style="position:absolute;left:580px;top:76px;font-size:13px;line-height:15px;white-space:pre;color:transparent;"><span style="text-decoration:underline;text-decoration-color:#000000;text-underline-offset:1px;">S</span></div><div style="position:absolute;left:659px;top:76px;font-size:13px;line-height:15px;color:#000000;font-weight:normal;letter-spacing:0px;white-space:pre;">Format</div><div style="position:absolute;left:659px;top:76px;font-size:13px;line-height:15px;white-space:pre;color:transparent;">Forma<span style="text-decoration:underline;text-decoration-color:#000000;text-underline-offset:1px;">t</span></div><div style="position:absolute;left:716px;top:76px;font-size:13px;line-height:15px;color:#000000;font-weight:normal;letter-spacing:0px;white-space:pre;">Tools</div><div style="position:absolute;left:716px;top:76px;font-size:13px;line-height:15px;white-space:pre;color:transparent;">T<span style="text-decoration:underline;text-decoration-color:#000000;text-underline-offset:1px;">o</span></div><div style="position:absolute;left:768px;top:76px;font-size:13px;line-height:15px;color:#000000;font-weight:normal;letter-spacing:0px;white-space:pre;">Help</div><div style="position:absolute;left:768px;top:76px;font-size:13px;line-height:15px;white-space:pre;color:transparent;"><span style="text-decoration:underline;text-decoration-color:#000000;text-underline-offset:1px;">H</span></div><div style="position:absolute;left:450px;top:94px;width:756px;height:1px;background:#848484;"></div><div style="position:absolute;left:450px;top:95px;width:756px;height:1px;background:#ffffff;"></div><svg style="position:absolute;left:461px;top:101px;" width="13" height="16" viewBox="0 0 13 16" shape-rendering="crispEdges"><path d="M1.5 1.5h7l3 3v10h-10z" fill="#ffffff" stroke="#000000"/><path d="M8.5 1.5v3h3" fill="none" stroke="#000000"/></svg><div style="position:absolute;left:482px;top:101px;width:1px;height:18px;background:#848484;"></div><div style="position:absolute;left:483px;top:101px;width:1px;height:18px;background:#ffffff;"></div><svg style="position:absolute;left:489px;top:100px;shape-rendering:auto" width="17" height="16" viewBox="0 0 17 16" shape-rendering="crispEdges"><path d="M1.5 4.5h4l1 1h5v8h-10z" fill="#ffff00" stroke="#000000"/><path d="M1.5 13.5l3-6h11l-3 6z" fill="#848400" stroke="#000000"/><path d="M9 3q3-3 6 0" stroke="#000000" fill="none"/><path d="M13 3h3v-2z" fill="#000000"/></svg><svg style="position:absolute;left:513px;top:101px;" width="15" height="15" viewBox="0 0 15 15" shape-rendering="crispEdges"><rect x="0.5" y="0.5" width="14" height="14" fill="#848400" stroke="#000000"/><rect x="3" y="1" width="9" height="6" fill="#c5c5c5"/><rect x="3" y="9" width="9" height="5" fill="#000000"/><rect x="9" y="10" width="2" height="3" fill="#c5c5c5"/></svg><svg style="position:absolute;left:535px;top:101px;shape-rendering:auto" width="17" height="15" viewBox="0 0 17 15" shape-rendering="crispEdges"><path d="M4.5 0.5h8v5h-8z" fill="#ffffff" stroke="#000000"/><path d="M1.5 5.5h14v7h-14z" fill="#c5c5c5" stroke="#000000"/><path d="M2 9h13" stroke="#000000"/><rect x="11" y="7" width="3" height="1" fill="#ffff00"/><path d="M3.5 12.5h10v2h-10z" fill="#ffffff" stroke="#000000"/></svg><div style="position:absolute;left:559px;top:101px;width:1px;height:18px;background:#848484;"></div><div style="position:absolute;left:560px;top:101px;width:1px;height:18px;background:#ffffff;"></div><svg style="position:absolute;left:570px;top:101px;shape-rendering:auto" width="12" height="16" viewBox="0 0 12 16" shape-rendering="crispEdges"><path d="M3 1l5 9M9 1l-5 9" stroke="#848484"/><circle cx="3" cy="12" r="2.5" fill="none" stroke="#848484"/><circle cx="9" cy="12" r="2.5" fill="none" stroke="#848484"/><path d="M3 1l5 9" stroke="#ffffff" transform="translate(1,1)"/></svg><svg style="position:absolute;left:589px;top:102px;" width="17" height="15" viewBox="0 0 17 15" shape-rendering="crispEdges"><path d="M1.5 0.5h6l2 2v7h-8z" fill="#c5c5c5" stroke="#848484"/><path d="M7.5 5.5h6l2 2v7h-8z" fill="#c5c5c5" stroke="#848484"/><path d="M3 4h4M3 6h4M9 9h5M9 11h5" stroke="#848484"/></svg><svg style="position:absolute;left:612px;top:101px;" width="18" height="16" viewBox="0 0 18 16" shape-rendering="crispEdges"><rect x="1" y="3" width="12" height="12" rx="2" fill="#848484"/><rect x="4" y="1" width="6" height="3" fill="#c5c5c5" stroke="#848484"/><path d="M7.5 7.5h8v8h-8z" fill="#c5c5c5" stroke="#848484"/><path d="M9 10h5M9 12h5" stroke="#848484"/></svg><div style="position:absolute;left:636px;top:101px;width:1px;height:18px;background:#848484;"></div><div style="position:absolute;left:637px;top:101px;width:1px;height:18px;background:#ffffff;"></div><svg style="position:absolute;left:643px;top:102px;shape-rendering:auto" width="18" height="15" viewBox="0 0 18 15" shape-rendering="crispEdges"><path d="M3 4h9a4 4 0 0 1 0 8h-8" stroke="#848484" stroke-width="1.5" fill="none"/><path d="M1 4l4-3v6z" fill="#848484"/><path d="M1 13h16" stroke="#848484" stroke-dasharray="1 1"/></svg><svg style="position:absolute;left:667px;top:102px;shape-rendering:auto" width="18" height="15" viewBox="0 0 18 15" shape-rendering="crispEdges"><path d="M15 4h-9a4 4 0 0 0 0 8h8" stroke="#848484" stroke-width="1.5" fill="none"/><path d="M17 4l-4-3v6z" fill="#848484"/><path d="M1 13h16" stroke="#848484" stroke-dasharray="1 1"/></svg><div style="position:absolute;left:690px;top:101px;width:1px;height:18px;background:#848484;"></div><div style="position:absolute;left:691px;top:101px;width:1px;height:18px;background:#ffffff;"></div><svg style="position:absolute;left:699px;top:101px;shape-rendering:auto" width="16" height="16" viewBox="0 0 16 16" shape-rendering="crispEdges"><path d="M2 1l7 6v-6z" fill="#008400"/><rect x="6" y="6" width="9" height="5" fill="#0000ff"/><circle cx="5" cy="11" r="3.5" fill="#ff00a5"/><path d="M1 1.5h11.5v12" stroke="#000000" fill="none"/><path d="M10 12h5l-2.5 3z" fill="#000000"/></svg><div style="position:absolute;left:718px;top:99px;width:23px;height:22px;background-color:#ffffff;background-image:repeating-conic-gradient(#c5c5c5 0 25%,#ffffff 0 50%);background-size:2px 2px;box-shadow:inset 1px 1px #848484,inset -1px -1px #ffffff;"></div><svg style="position:absolute;left:722px;top:103px;" width="16" height="15" viewBox="0 0 16 15" shape-rendering="crispEdges"><rect x="0.5" y="0.5" width="15" height="14" fill="#ffffff" stroke="#000000"/><rect x="1" y="1" width="14" height="3" fill="#000084"/><path d="M3 6h3v7h-3zM8 6h5v3h-5zM8 10h5v3h-5z" fill="none" stroke="#000000"/></svg><svg style="position:absolute;left:744px;top:101px;shape-rendering:auto" width="17" height="16" viewBox="0 0 17 16" shape-rendering="crispEdges"><path d="M4 1l-3 4h2v6h2v-6h2z" fill="#a5a5a5"/><path d="M5 11h6l2 2h3" stroke="#a5a5a5" fill="none"/><circle cx="11" cy="12" r="2" fill="none" stroke="#a5a5a5"/><path d="M5 1l2 3" stroke="#ffffff"/></svg><svg style="position:absolute;left:766px;top:101px;shape-rendering:auto" width="17" height="16" viewBox="0 0 17 16" shape-rendering="crispEdges"><circle cx="8.5" cy="8" r="7" fill="#ffffff" stroke="#ff0000" stroke-width="1.5"/><path d="M4 4l9 8" stroke="#ff0000" stroke-width="1.5"/><ellipse cx="8.5" cy="8" rx="2.5" ry="3.5" fill="#000000"/><path d="M3 6l3 1M3 10l3-1M14 6l-3 1M14 10l-3-1M6 3l1 2M11 3l-1 2" stroke="#000000"/></svg><div style="position:absolute;left:790px;top:101px;width:1px;height:18px;background:#848484;"></div><div style="position:absolute;left:791px;top:101px;width:1px;height:18px;background:#ffffff;"></div><svg style="position:absolute;left:802px;top:103px;" width="9" height="14" viewBox="0 0 9 14" shape-rendering="crispEdges"><path d="M1 1l7 6l-7 6z" fill="#000000"/></svg><div style="position:absolute;left:826px;top:106px;width:8px;height:8px;background:#848484;box-shadow:1px 1px #ffffff;"></div><div style="position:absolute;left:845px;top:99px;width:99px;height:21px;background:#ffffff;box-shadow:inset 1px 1px #848484,inset -1px -1px #ffffff,inset 2px 2px #000000,inset -2px -2px #dedede;"></div><div style="position:absolute;left:927px;top:101px;width:15px;height:17px;background:#c5c5c5;box-shadow:inset -1px -1px #000000,inset 1px 1px #ffffff,inset -2px -2px #848484,inset 2px 2px #dedede;"></div><svg style="position:absolute;left:927px;top:101px;" width="15" height="17" viewBox="0 0 15 17" shape-rendering="crispEdges"><path d="M4 7h7l-3.5 4z" fill="#000000"/></svg><div style="position:absolute;left:849px;top:104px;font-size:11.5px;line-height:13px;color:#000000;font-weight:normal;letter-spacing:0px;white-space:pre;">Normal</div><div style="position:absolute;left:450px;top:124px;width:756px;height:1px;background:#848484;"></div><div style="position:absolute;left:450px;top:125px;width:212px;height:25px;background:#c5c5c5;box-shadow:inset 0 1px #ffffff;"></div><div style="position:absolute;left:456px;top:132px;font-size:11px;line-height:13px;color:#000000;font-weight:normal;letter-spacing:-0.2px;white-space:pre;">Model Browser</div><div style="position:absolute;left:596px;top:129px;width:20px;height:19px;background:#c5c5c5;box-shadow:inset -1px -1px #848484,inset 1px 1px #ffffff;"></div><div style="position:absolute;left:618px;top:129px;width:20px;height:19px;background:#c5c5c5;box-shadow:inset -1px -1px #848484,inset 1px 1px #ffffff;"></div><div style="position:absolute;left:640px;top:129px;width:20px;height:19px;background:#c5c5c5;box-shadow:inset -1px -1px #848484,inset 1px 1px #ffffff;"></div><svg style="position:absolute;left:596px;top:129px" width="64" height="19" viewBox="596 129 64 19" shape-rendering="auto"><path d="M599 137.5l4-4" stroke="#000000" stroke-width="1.3"/><path d="M601 131.5h3.5v3.5z" fill="#000000"/><path d="M602.5 143.5L612 133.5" stroke="#0000a5" stroke-width="7" stroke-linecap="round"/><path d="M602.5 143.5L612 133.5" stroke="#ffffff" stroke-width="4.4" stroke-linecap="round"/><path d="M603.5 142.5L611 134.5" stroke="#0000a5" stroke-width="1.4"/><circle cx="607.3" cy="138.5" r="1.3" fill="#ffffff"/><rect x="621" y="131" width="8" height="10" fill="#ffffff"/><path d="M622 133l3 1.5l-3 1.5M621 137h5l2 1.5" stroke="#000000" fill="none" stroke-width="0.9"/><path d="M621 139.5h6" stroke="#000000" stroke-width="0.9"/><circle cx="625" cy="143.5" r="2.4" fill="#ffffff" stroke="#000000" stroke-width="1.2"/><circle cx="631" cy="143.5" r="2.4" fill="#ffffff" stroke="#000000" stroke-width="1.2"/><circle cx="625" cy="142.8" r="1.2" fill="#00ffff"/><circle cx="631" cy="142.8" r="1.2" fill="#00ffff"/><path d="M633 142l2.5-4" stroke="#000000" stroke-width="1"/><path d="M646 135l8 7M654 135l-8 7" stroke="#000000" stroke-width="1.8"/></svg><div style="position:absolute;left:450px;top:150px;width:207px;height:337px;background:#ffffff;box-shadow:inset 1px 1px #848484,inset -1px -1px #ffffff,inset 2px 2px #000000,inset -2px -2px #dedede;"></div><div style="position:absolute;left:657px;top:150px;width:5px;height:337px;background:#c5c5c5;"></div><div style="position:absolute;left:457px;top:158px;width:9px;height:9px;background:#ffffff;border:1px solid #848484;box-sizing:border-box;"></div><div style="position:absolute;left:459px;top:162px;width:5px;height:1px;background:#000000;"></div><svg style="position:absolute;left:467px;top:162px;" width="7" height="1" viewBox="0 0 7 1" shape-rendering="crispEdges"><path d="M0 0.5h7" stroke="#848484" stroke-dasharray="1 1"/></svg><svg style="position:absolute;left:474px;top:153px;" width="16" height="16" viewBox="0 0 16 16" shape-rendering="crispEdges"><rect x="1" y="0" width="15" height="15" fill="#c5c5c5"/><rect x="1" y="0" width="15" height="1" fill="#ffffff"/><rect x="1" y="0" width="1" height="15" fill="#ffffff"/><rect x="15" y="0" width="1" height="1" fill="#00ffff"/><rect x="1" y="14" width="1" height="1" fill="#00ffff"/><path d="M2 2L9 6.5L2 11Z" fill="#008400" shape-rendering="auto"/><rect x="6" y="6" width="9" height="4" fill="#0000ff"/><circle cx="7" cy="10.5" r="3.6" fill="#ff0000" shape-rendering="auto"/><rect x="2" y="2" width="11" height="1" fill="#000000"/><rect x="12" y="2" width="1" height="12" fill="#000000"/><path d="M10 11h5l-2.5 3z" fill="#000000" shape-rendering="auto"/><rect x="7" y="8" width="1" height="3" fill="#000000"/><rect x="7" y="10" width="3" height="1" fill="#000000"/></svg><div style="position:absolute;left:494px;top:152px;width:22px;height:18px;background:#000084;"></div><div style="position:absolute;left:497px;top:155px;font-size:11px;line-height:13px;color:#ffffff;font-weight:normal;letter-spacing:0px;white-space:pre;">vdp</div><svg style="position:absolute;left:482px;top:170px;" width="12" height="12" viewBox="0 0 12 12" shape-rendering="crispEdges"><path d="M0.5 0v10.5h11" stroke="#848484" stroke-dasharray="1 1" fill="none"/></svg><svg style="position:absolute;left:496px;top:172px;" width="16" height="15" viewBox="0 0 16 15" shape-rendering="crispEdges"><rect x="0" y="0" width="16" height="15" fill="#c5c5c5"/><path d="M0.5 14.5v-14h15" stroke="#ffffff" fill="none"/><path d="M15.5 0v14.5h-15" stroke="#848484" fill="none"/><path d="M3.5 2.5l4 3l-4 3" stroke="#000000" fill="none"/><path d="M2 5.5h8" stroke="#000000"/><path d="M9 6.5v0M12 8.5h2.5M2.5 11.5h8v-1" stroke="#000000" fill="none"/><rect x="8.5" y="6.5" width="3" height="3" fill="#ffffff" stroke="#000000"/></svg><div style="position:absolute;left:518px;top:172px;font-size:11px;line-height:13px;color:#000000;font-weight:normal;letter-spacing:-0.15px;white-space:pre;">More Info</div><div style="position:absolute;left:662px;top:124px;width:544px;height:363px;background:#ffffff;box-shadow:inset 1px 1px #848484,inset -1px -1px #ffffff,inset 2px 2px #000000,inset -2px -2px #dedede;"></div><div style="position:absolute;left:454px;top:491px;font-size:11.5px;line-height:13px;color:#000000;font-weight:normal;letter-spacing:0px;white-space:pre;">Ready</div><div style="position:absolute;left:833px;top:489px;width:70px;height:16px;box-shadow:inset 1px 1px #848484,inset -1px -1px #ffffff;"></div><div style="position:absolute;left:836px;top:491px;font-size:11px;line-height:13px;color:#000000;font-weight:normal;letter-spacing:0px;white-space:pre;">100%</div><div style="position:absolute;left:905px;top:489px;width:70px;height:16px;box-shadow:inset 1px 1px #848484,inset -1px -1px #ffffff;"></div><div style="position:absolute;left:977px;top:489px;width:70px;height:16px;box-shadow:inset 1px 1px #848484,inset -1px -1px #ffffff;"></div><div style="position:absolute;left:1049px;top:489px;width:139px;height:16px;box-shadow:inset 1px 1px #848484,inset -1px -1px #ffffff;"></div><div style="position:absolute;left:1052px;top:491px;font-size:11px;line-height:13px;color:#000000;font-weight:normal;letter-spacing:0px;white-space:pre;">ode45</div><svg style="position:absolute;left:1193px;top:492px;shape-rendering:auto" width="13" height="13" viewBox="0 0 13 13" shape-rendering="crispEdges"><path d="M12 0L0 12M12 4L4 12M12 8L8 12" stroke="#ffffff"/><path d="M12 1L1 12M12 5L5 12M12 9L9 12" stroke="#848484"/></svg><svg style="position:absolute;left:664px;top:0px;" width="540" height="1024" viewBox="664 0 540 1024" shape-rendering="crispEdges"><path d="M1074.5 276.5 L1074.5 181.5 L689.5 181.5 L689.5 236.5 L704.5 236.5" fill="none" stroke="#000000"/><path d="M899.5 181.5 L899.5 236.5 L909.5 236.5" fill="none" stroke="#000000"/><path d="M774.5 236.5 L794.5 236.5" fill="none" stroke="#000000"/><path d="M689.5 261.5 L794.5 261.5" fill="none" stroke="#000000"/><path d="M689.5 261.5 L689.5 311.5 L1039.5 311.5" fill="none" stroke="#000000"/><path d="M829.5 251.5 L849.5 251.5" fill="none" stroke="#000000"/><path d="M885.5 251.5 L909.5 251.5" fill="none" stroke="#000000"/><path d="M944.5 246.5 L959.5 246.5" fill="none" stroke="#000000"/><path d="M989.5 246.5 L1024.5 246.5" fill="none" stroke="#000000"/><path d="M1009.5 311.5 L1009.5 206.5 L1019.5 206.5" fill="none" stroke="#000000"/><path d="M1054.5 246.5 L1153.5 246.5" fill="none" stroke="#000000"/><path d="M1074.5 276.5 L1029.5 276.5 L1029.5 295.5 L1039.5 295.5" fill="none" stroke="#000000"/><path d="M1084.5 305.5 L1109.5 305.5" fill="none" stroke="#000000"/><rect x="898" y="180" width="3" height="3" fill="#000000"/><rect x="1008" y="245" width="3" height="3" fill="#000000"/><rect x="1008" y="310" width="3" height="3" fill="#000000"/><rect x="1073" y="245" width="3" height="3" fill="#000000"/><path d="M704 232 L714 236.5 L704 241 Z" fill="#000000" shape-rendering="auto"/><path d="M794 232 L804 236.5 L794 241 Z" fill="#000000" shape-rendering="auto"/><path d="M794 257 L804 261.5 L794 266 Z" fill="#000000" shape-rendering="auto"/><path d="M849 247 L859 251.5 L849 256 Z" fill="#000000" shape-rendering="auto"/><path d="M909 232 L919 236.5 L909 241 Z" fill="#000000" shape-rendering="auto"/><path d="M909 247 L919 251.5 L909 256 Z" fill="#000000" shape-rendering="auto"/><path d="M959 242 L969 246.5 L959 251 Z" fill="#000000" shape-rendering="auto"/><path d="M1024 242 L1034 246.5 L1024 251 Z" fill="#000000" shape-rendering="auto"/><path d="M1019 202 L1029 206.5 L1019 211 Z" fill="#000000" shape-rendering="auto"/><path d="M1154 242 L1164 246.5 L1154 251 Z" fill="#000000" shape-rendering="auto"/><path d="M1039 291 L1049 295.5 L1039 300 Z" fill="#000000" shape-rendering="auto"/><path d="M1039 306 L1049 310.5 L1039 315 Z" fill="#000000" shape-rendering="auto"/><path d="M1109 301 L1119 305.5 L1109 310 Z" fill="#000000" shape-rendering="auto"/><path d="M1039.5 310.5 L1039.5 310.5" fill="none" stroke="#000000"/><rect x="714.5" y="225.5" width="60" height="22" fill="none" stroke="#000000"/><text x="744" y="239" font-size="10" font-family="Liberation Sans" text-anchor="middle" letter-spacing="0.3" fill="#000000" shape-rendering="auto">1 - u*u</text><rect x="804.5" y="225.5" width="25" height="47" fill="none" stroke="#000000"/><path d="M813 245 L821 253 M821 245 L813 253" stroke="#000000" shape-rendering="auto"/><path d="M859.5 239.5 L885.5 251.5 L859.5 263.5 Z" fill="#ffffff" stroke="#000000" shape-rendering="auto"/><text x="862" y="255" font-size="10" font-family="Liberation Sans" text-anchor="start" letter-spacing="0.3" fill="#000000" shape-rendering="auto">1</text><rect x="919.5" y="228.5" width="25" height="31" fill="none" stroke="#000000"/><text x="922" y="240" font-size="10" font-family="Liberation Sans" text-anchor="start" letter-spacing="0.3" fill="#000000" shape-rendering="auto">–</text><text x="921" y="255" font-size="10" font-family="Liberation Sans" text-anchor="start" letter-spacing="0" fill="#000000" shape-rendering="auto">+</text><rect x="969.5" y="235.5" width="20" height="22" fill="none" stroke="#000000"/><text x="979.5" y="250" font-size="10" font-family="Liberation Sans" text-anchor="middle" letter-spacing="0" fill="#000000" shape-rendering="auto">1/s</text><rect x="1034.5" y="235.5" width="20" height="22" fill="none" stroke="#000000"/><text x="1044.5" y="250" font-size="10" font-family="Liberation Sans" text-anchor="middle" letter-spacing="0" fill="#000000" shape-rendering="auto">1/s</text><circle cx="1039.5" cy="206.5" r="10" fill="#ffffff" stroke="#000000" shape-rendering="auto"/><text x="1039.5" y="210" font-size="10" font-family="Liberation Sans" text-anchor="middle" letter-spacing="0.3" fill="#000000" shape-rendering="auto">2</text><circle cx="1174.5" cy="246.5" r="10" fill="#ffffff" stroke="#000000" shape-rendering="auto"/><text x="1174.5" y="250" font-size="10" font-family="Liberation Sans" text-anchor="middle" letter-spacing="0.3" fill="#000000" shape-rendering="auto">1</text><rect x="1049.5" y="290.5" width="35" height="27" fill="none" stroke="#000000"/><text x="1067" y="306" font-size="10" font-family="Liberation Sans" text-anchor="middle" letter-spacing="0.3" fill="#000000" shape-rendering="auto">Mux</text><rect x="1119.5" y="287.5" width="30" height="38" fill="none" stroke="#000000"/><rect x="1123.5" y="292.5" width="22" height="14" fill="none" stroke="#000000"/><text x="744" y="259" font-size="10" font-family="Liberation Sans" text-anchor="middle" letter-spacing="0.3" fill="#000000" shape-rendering="auto">Fcn</text><text x="872" y="276" font-size="10" font-family="Liberation Sans" text-anchor="middle" letter-spacing="0.3" fill="#000000" shape-rendering="auto">Mu</text><text x="1039" y="228" font-size="10" font-family="Liberation Sans" text-anchor="middle" letter-spacing="0.3" fill="#000000" shape-rendering="auto">Out2</text><text x="1174" y="268" font-size="10" font-family="Liberation Sans" text-anchor="middle" letter-spacing="0.3" fill="#000000" shape-rendering="auto">Out1</text><text x="1134" y="337" font-size="10" font-family="Liberation Sans" text-anchor="middle" letter-spacing="0.3" fill="#000000" shape-rendering="auto">Scope</text><text x="691" y="211" font-size="10" font-family="Liberation Sans" text-anchor="start" letter-spacing="0.3" fill="#000000" shape-rendering="auto">x1</text><text x="691" y="289" font-size="10" font-family="Liberation Sans" text-anchor="start" letter-spacing="0.3" fill="#000000" shape-rendering="auto">x2</text><text x="996" y="243" font-size="10" font-family="Liberation Sans" text-anchor="start" letter-spacing="0.3" fill="#000000" shape-rendering="auto">x2</text><text x="1060" y="243" font-size="10" font-family="Liberation Sans" text-anchor="start" letter-spacing="0.3" fill="#000000" shape-rendering="auto">x1</text><text x="922" y="154" font-size="14" font-family="Liberation Sans" text-anchor="middle" letter-spacing="0" fill="#000000" shape-rendering="auto">van der Pol Equation</text><text x="808" y="350" font-size="10" font-family="Liberation Sans" text-anchor="middle" letter-spacing="0.3" fill="#000000" shape-rendering="auto">The van der Pol Equation</text><text x="808" y="363" font-size="10" font-family="Liberation Sans" text-anchor="middle" letter-spacing="0.3" fill="#000000" shape-rendering="auto">(Double-click on the "?" for more info)</text><text x="808" y="400" font-size="10" font-family="Liberation Sans" text-anchor="middle" letter-spacing="0.3" fill="#000000" shape-rendering="auto">To start and stop the simulation, use the "Start/Stop"</text><text x="808" y="413" font-size="10" font-family="Liberation Sans" text-anchor="middle" letter-spacing="0.3" fill="#000000" shape-rendering="auto">selection in the "Simulation" pull-down menu</text><rect x="927" y="344" width="28" height="26" fill="#000000"/><rect x="924" y="341" width="28" height="26" fill="#ffffff"/><rect x="924.5" y="341.5" width="27" height="25" fill="none" stroke="#000000"/><text x="938" y="356" font-size="10" font-family="Liberation Sans" text-anchor="middle" letter-spacing="0.3" fill="#000000" shape-rendering="auto">?</text><rect x="972" y="344" width="104" height="52" fill="#000000"/><rect x="969" y="341" width="104" height="52" fill="#ffffff"/><rect x="969.5" y="341.5" width="103" height="51" fill="none" stroke="#000000"/><text x="1020" y="356" font-size="10" font-family="Liberation Sans" text-anchor="middle" letter-spacing="0.3" fill="#000000" shape-rendering="auto">Double-click</text><text x="1020" y="369" font-size="10" font-family="Liberation Sans" text-anchor="middle" letter-spacing="0.3" fill="#000000" shape-rendering="auto">here for</text><text x="1020" y="382" font-size="10" font-family="Liberation Sans" text-anchor="middle" letter-spacing="0.3" fill="#000000" shape-rendering="auto">Simulink Help</text></svg><div style="position:absolute;left:446px;top:511px;width:764px;height:457px;background:#c5c5c5;box-shadow:inset -1px -1px #000000,inset 1px 1px #dedede,inset -2px -2px #848484,inset 2px 2px #ffffff;"></div><div style="position:absolute;left:450px;top:515px;width:756px;height:18px;background:#000084;"></div><svg style="position:absolute;left:451px;top:516px;" width="16" height="16" viewBox="0 0 16 16" shape-rendering="crispEdges"><rect x="1" y="0" width="15" height="15" fill="#c5c5c5"/><rect x="1" y="0" width="15" height="1" fill="#ffffff"/><rect x="1" y="0" width="1" height="15" fill="#ffffff"/><rect x="15" y="0" width="1" height="1" fill="#00ffff"/><rect x="1" y="14" width="1" height="1" fill="#00ffff"/><path d="M2 2L9 6.5L2 11Z" fill="#008400" shape-rendering="auto"/><rect x="6" y="6" width="9" height="4" fill="#0000ff"/><circle cx="7" cy="10.5" r="3.6" fill="#ff0000" shape-rendering="auto"/><rect x="2" y="2" width="11" height="1" fill="#000000"/><rect x="12" y="2" width="1" height="12" fill="#000000"/><path d="M10 11h5l-2.5 3z" fill="#000000" shape-rendering="auto"/><rect x="7" y="8" width="1" height="3" fill="#000000"/><rect x="7" y="10" width="3" height="1" fill="#000000"/></svg><div style="position:absolute;left:470px;top:517px;font-size:13px;line-height:15px;color:#ffffff;font-weight:bold;letter-spacing:0.8px;white-space:pre;">vdp1</div><div style="position:absolute;left:1188px;top:517px;width:16px;height:14px;background:#c5c5c5;box-shadow:inset -1px -1px #000000,inset 1px 1px #ffffff,inset -2px -2px #848484,inset 2px 2px #dedede;"></div><svg style="position:absolute;left:1188px;top:517px;" width="16" height="14" viewBox="0 0 16 14" shape-rendering="crispEdges"><path d="M4 3h2v1h1v1h2v-1h1v-1h2v1h-1v1h-1v1h-1v1h1v1h1v1h1v1h-2v-1h-1v-1h-2v1h-1v1h-2v-1h1v-1h1v-1h1v-1h-1v-1h-1v-1h-1z" fill="#000000"/></svg><div style="position:absolute;left:1170px;top:517px;width:16px;height:14px;background:#c5c5c5;box-shadow:inset -1px -1px #000000,inset 1px 1px #ffffff,inset -2px -2px #848484,inset 2px 2px #dedede;"></div><svg style="position:absolute;left:1170px;top:517px;" width="16" height="14" viewBox="0 0 16 14" shape-rendering="crispEdges"><path d="M3 2h9v9h-9z M4 4v6h7v-6z" fill="#000000" fill-rule="evenodd"/></svg><div style="position:absolute;left:1154px;top:517px;width:16px;height:14px;background:#c5c5c5;box-shadow:inset -1px -1px #000000,inset 1px 1px #ffffff,inset -2px -2px #848484,inset 2px 2px #dedede;"></div><svg style="position:absolute;left:1154px;top:517px;" width="16" height="14" viewBox="0 0 16 14" shape-rendering="crispEdges"><rect x="4" y="9" width="6" height="2" fill="#000000"/></svg><div style="position:absolute;left:459px;top:535px;font-size:13px;line-height:15px;color:#000000;font-weight:normal;letter-spacing:0px;white-space:pre;">File</div><div style="position:absolute;left:459px;top:535px;font-size:13px;line-height:15px;white-space:pre;color:transparent;"><span style="text-decoration:underline;text-decoration-color:#000000;text-underline-offset:1px;">F</span></div><div style="position:absolute;left:496px;top:535px;font-size:13px;line-height:15px;color:#000000;font-weight:normal;letter-spacing:0px;white-space:pre;">Edit</div><div style="position:absolute;left:496px;top:535px;font-size:13px;line-height:15px;white-space:pre;color:transparent;"><span style="text-decoration:underline;text-decoration-color:#000000;text-underline-offset:1px;">E</span></div><div style="position:absolute;left:535px;top:535px;font-size:13px;line-height:15px;color:#000000;font-weight:normal;letter-spacing:0px;white-space:pre;">View</div><div style="position:absolute;left:535px;top:535px;font-size:13px;line-height:15px;white-space:pre;color:transparent;"><span style="text-decoration:underline;text-decoration-color:#000000;text-underline-offset:1px;">V</span></div><div style="position:absolute;left:580px;top:535px;font-size:13px;line-height:15px;color:#000000;font-weight:normal;letter-spacing:0px;white-space:pre;">Simulation</div><div style="position:absolute;left:580px;top:535px;font-size:13px;line-height:15px;white-space:pre;color:transparent;"><span style="text-decoration:underline;text-decoration-color:#000000;text-underline-offset:1px;">S</span></div><div style="position:absolute;left:659px;top:535px;font-size:13px;line-height:15px;color:#000000;font-weight:normal;letter-spacing:0px;white-space:pre;">Format</div><div style="position:absolute;left:659px;top:535px;font-size:13px;line-height:15px;white-space:pre;color:transparent;">Forma<span style="text-decoration:underline;text-decoration-color:#000000;text-underline-offset:1px;">t</span></div><div style="position:absolute;left:716px;top:535px;font-size:13px;line-height:15px;color:#000000;font-weight:normal;letter-spacing:0px;white-space:pre;">Tools</div><div style="position:absolute;left:716px;top:535px;font-size:13px;line-height:15px;white-space:pre;color:transparent;">T<span style="text-decoration:underline;text-decoration-color:#000000;text-underline-offset:1px;">o</span></div><div style="position:absolute;left:768px;top:535px;font-size:13px;line-height:15px;color:#000000;font-weight:normal;letter-spacing:0px;white-space:pre;">Help</div><div style="position:absolute;left:768px;top:535px;font-size:13px;line-height:15px;white-space:pre;color:transparent;"><span style="text-decoration:underline;text-decoration-color:#000000;text-underline-offset:1px;">H</span></div><div style="position:absolute;left:450px;top:553px;width:756px;height:1px;background:#848484;"></div><div style="position:absolute;left:450px;top:554px;width:756px;height:1px;background:#ffffff;"></div><svg style="position:absolute;left:461px;top:560px;" width="13" height="16" viewBox="0 0 13 16" shape-rendering="crispEdges"><path d="M1.5 1.5h7l3 3v10h-10z" fill="#ffffff" stroke="#000000"/><path d="M8.5 1.5v3h3" fill="none" stroke="#000000"/></svg><div style="position:absolute;left:482px;top:560px;width:1px;height:18px;background:#848484;"></div><div style="position:absolute;left:483px;top:560px;width:1px;height:18px;background:#ffffff;"></div><svg style="position:absolute;left:489px;top:559px;shape-rendering:auto" width="17" height="16" viewBox="0 0 17 16" shape-rendering="crispEdges"><path d="M1.5 4.5h4l1 1h5v8h-10z" fill="#ffff00" stroke="#000000"/><path d="M1.5 13.5l3-6h11l-3 6z" fill="#848400" stroke="#000000"/><path d="M9 3q3-3 6 0" stroke="#000000" fill="none"/><path d="M13 3h3v-2z" fill="#000000"/></svg><svg style="position:absolute;left:513px;top:560px;" width="15" height="15" viewBox="0 0 15 15" shape-rendering="crispEdges"><rect x="0.5" y="0.5" width="14" height="14" fill="#848400" stroke="#000000"/><rect x="3" y="1" width="9" height="6" fill="#c5c5c5"/><rect x="3" y="9" width="9" height="5" fill="#000000"/><rect x="9" y="10" width="2" height="3" fill="#c5c5c5"/></svg><svg style="position:absolute;left:535px;top:560px;shape-rendering:auto" width="17" height="15" viewBox="0 0 17 15" shape-rendering="crispEdges"><path d="M4.5 0.5h8v5h-8z" fill="#ffffff" stroke="#000000"/><path d="M1.5 5.5h14v7h-14z" fill="#c5c5c5" stroke="#000000"/><path d="M2 9h13" stroke="#000000"/><rect x="11" y="7" width="3" height="1" fill="#ffff00"/><path d="M3.5 12.5h10v2h-10z" fill="#ffffff" stroke="#000000"/></svg><div style="position:absolute;left:559px;top:560px;width:1px;height:18px;background:#848484;"></div><div style="position:absolute;left:560px;top:560px;width:1px;height:18px;background:#ffffff;"></div><svg style="position:absolute;left:570px;top:560px;shape-rendering:auto" width="12" height="16" viewBox="0 0 12 16" shape-rendering="crispEdges"><path d="M3 1l5 9M9 1l-5 9" stroke="#848484"/><circle cx="3" cy="12" r="2.5" fill="none" stroke="#848484"/><circle cx="9" cy="12" r="2.5" fill="none" stroke="#848484"/><path d="M3 1l5 9" stroke="#ffffff" transform="translate(1,1)"/></svg><svg style="position:absolute;left:589px;top:561px;" width="17" height="15" viewBox="0 0 17 15" shape-rendering="crispEdges"><path d="M1.5 0.5h6l2 2v7h-8z" fill="#c5c5c5" stroke="#848484"/><path d="M7.5 5.5h6l2 2v7h-8z" fill="#c5c5c5" stroke="#848484"/><path d="M3 4h4M3 6h4M9 9h5M9 11h5" stroke="#848484"/></svg><svg style="position:absolute;left:612px;top:560px;" width="18" height="16" viewBox="0 0 18 16" shape-rendering="crispEdges"><rect x="1" y="3" width="12" height="12" rx="2" fill="#848484"/><rect x="4" y="1" width="6" height="3" fill="#c5c5c5" stroke="#848484"/><path d="M7.5 7.5h8v8h-8z" fill="#c5c5c5" stroke="#848484"/><path d="M9 10h5M9 12h5" stroke="#848484"/></svg><div style="position:absolute;left:636px;top:560px;width:1px;height:18px;background:#848484;"></div><div style="position:absolute;left:637px;top:560px;width:1px;height:18px;background:#ffffff;"></div><svg style="position:absolute;left:643px;top:561px;shape-rendering:auto" width="18" height="15" viewBox="0 0 18 15" shape-rendering="crispEdges"><path d="M3 4h9a4 4 0 0 1 0 8h-8" stroke="#848484" stroke-width="1.5" fill="none"/><path d="M1 4l4-3v6z" fill="#848484"/><path d="M1 13h16" stroke="#848484" stroke-dasharray="1 1"/></svg><svg style="position:absolute;left:667px;top:561px;shape-rendering:auto" width="18" height="15" viewBox="0 0 18 15" shape-rendering="crispEdges"><path d="M15 4h-9a4 4 0 0 0 0 8h8" stroke="#848484" stroke-width="1.5" fill="none"/><path d="M17 4l-4-3v6z" fill="#848484"/><path d="M1 13h16" stroke="#848484" stroke-dasharray="1 1"/></svg><div style="position:absolute;left:690px;top:560px;width:1px;height:18px;background:#848484;"></div><div style="position:absolute;left:691px;top:560px;width:1px;height:18px;background:#ffffff;"></div><svg style="position:absolute;left:699px;top:560px;shape-rendering:auto" width="16" height="16" viewBox="0 0 16 16" shape-rendering="crispEdges"><path d="M2 1l7 6v-6z" fill="#008400"/><rect x="6" y="6" width="9" height="5" fill="#0000ff"/><circle cx="5" cy="11" r="3.5" fill="#ff00a5"/><path d="M1 1.5h11.5v12" stroke="#000000" fill="none"/><path d="M10 12h5l-2.5 3z" fill="#000000"/></svg><div style="position:absolute;left:718px;top:558px;width:23px;height:22px;background-color:#ffffff;background-image:repeating-conic-gradient(#c5c5c5 0 25%,#ffffff 0 50%);background-size:2px 2px;box-shadow:inset 1px 1px #848484,inset -1px -1px #ffffff;"></div><svg style="position:absolute;left:722px;top:562px;" width="16" height="15" viewBox="0 0 16 15" shape-rendering="crispEdges"><rect x="0.5" y="0.5" width="15" height="14" fill="#ffffff" stroke="#000000"/><rect x="1" y="1" width="14" height="3" fill="#000084"/><path d="M3 6h3v7h-3zM8 6h5v3h-5zM8 10h5v3h-5z" fill="none" stroke="#000000"/></svg><svg style="position:absolute;left:744px;top:560px;shape-rendering:auto" width="17" height="16" viewBox="0 0 17 16" shape-rendering="crispEdges"><path d="M4 1l-3 4h2v6h2v-6h2z" fill="#a5a5a5"/><path d="M5 11h6l2 2h3" stroke="#a5a5a5" fill="none"/><circle cx="11" cy="12" r="2" fill="none" stroke="#a5a5a5"/><path d="M5 1l2 3" stroke="#ffffff"/></svg><svg style="position:absolute;left:766px;top:560px;shape-rendering:auto" width="17" height="16" viewBox="0 0 17 16" shape-rendering="crispEdges"><circle cx="8.5" cy="8" r="7" fill="#ffffff" stroke="#ff0000" stroke-width="1.5"/><path d="M4 4l9 8" stroke="#ff0000" stroke-width="1.5"/><ellipse cx="8.5" cy="8" rx="2.5" ry="3.5" fill="#000000"/><path d="M3 6l3 1M3 10l3-1M14 6l-3 1M14 10l-3-1M6 3l1 2M11 3l-1 2" stroke="#000000"/></svg><div style="position:absolute;left:790px;top:560px;width:1px;height:18px;background:#848484;"></div><div style="position:absolute;left:791px;top:560px;width:1px;height:18px;background:#ffffff;"></div><svg style="position:absolute;left:802px;top:562px;" width="9" height="14" viewBox="0 0 9 14" shape-rendering="crispEdges"><path d="M1 1l7 6l-7 6z" fill="#000000"/></svg><div style="position:absolute;left:826px;top:565px;width:8px;height:8px;background:#848484;box-shadow:1px 1px #ffffff;"></div><div style="position:absolute;left:845px;top:558px;width:99px;height:21px;background:#ffffff;box-shadow:inset 1px 1px #848484,inset -1px -1px #ffffff,inset 2px 2px #000000,inset -2px -2px #dedede;"></div><div style="position:absolute;left:927px;top:560px;width:15px;height:17px;background:#c5c5c5;box-shadow:inset -1px -1px #000000,inset 1px 1px #ffffff,inset -2px -2px #848484,inset 2px 2px #dedede;"></div><svg style="position:absolute;left:927px;top:560px;" width="15" height="17" viewBox="0 0 15 17" shape-rendering="crispEdges"><path d="M4 7h7l-3.5 4z" fill="#000000"/></svg><div style="position:absolute;left:849px;top:563px;font-size:11.5px;line-height:13px;color:#000000;font-weight:normal;letter-spacing:0px;white-space:pre;">Normal</div><div style="position:absolute;left:450px;top:583px;width:756px;height:1px;background:#848484;"></div><div style="position:absolute;left:450px;top:584px;width:200px;height:25px;background:#c5c5c5;box-shadow:inset 0 1px #ffffff;"></div><div style="position:absolute;left:456px;top:591px;font-size:11px;line-height:13px;color:#000000;font-weight:normal;letter-spacing:-0.2px;white-space:pre;">Model Browser</div><div style="position:absolute;left:584px;top:588px;width:20px;height:19px;background:#c5c5c5;box-shadow:inset -1px -1px #848484,inset 1px 1px #ffffff;"></div><div style="position:absolute;left:606px;top:588px;width:20px;height:19px;background:#c5c5c5;box-shadow:inset -1px -1px #848484,inset 1px 1px #ffffff;"></div><div style="position:absolute;left:628px;top:588px;width:20px;height:19px;background:#c5c5c5;box-shadow:inset -1px -1px #848484,inset 1px 1px #ffffff;"></div><svg style="position:absolute;left:584px;top:588px" width="64" height="19" viewBox="596 129 64 19" shape-rendering="auto"><path d="M599 137.5l4-4" stroke="#000000" stroke-width="1.3"/><path d="M601 131.5h3.5v3.5z" fill="#000000"/><path d="M602.5 143.5L612 133.5" stroke="#0000a5" stroke-width="7" stroke-linecap="round"/><path d="M602.5 143.5L612 133.5" stroke="#ffffff" stroke-width="4.4" stroke-linecap="round"/><path d="M603.5 142.5L611 134.5" stroke="#0000a5" stroke-width="1.4"/><circle cx="607.3" cy="138.5" r="1.3" fill="#ffffff"/><rect x="621" y="131" width="8" height="10" fill="#ffffff"/><path d="M622 133l3 1.5l-3 1.5M621 137h5l2 1.5" stroke="#000000" fill="none" stroke-width="0.9"/><path d="M621 139.5h6" stroke="#000000" stroke-width="0.9"/><circle cx="625" cy="143.5" r="2.4" fill="#ffffff" stroke="#000000" stroke-width="1.2"/><circle cx="631" cy="143.5" r="2.4" fill="#ffffff" stroke="#000000" stroke-width="1.2"/><circle cx="625" cy="142.8" r="1.2" fill="#00ffff"/><circle cx="631" cy="142.8" r="1.2" fill="#00ffff"/><path d="M633 142l2.5-4" stroke="#000000" stroke-width="1"/><path d="M646 135l8 7M654 135l-8 7" stroke="#000000" stroke-width="1.8"/></svg><div style="position:absolute;left:450px;top:609px;width:195px;height:337px;background:#ffffff;box-shadow:inset 1px 1px #848484,inset -1px -1px #ffffff,inset 2px 2px #000000,inset -2px -2px #dedede;"></div><div style="position:absolute;left:645px;top:609px;width:5px;height:337px;background:#c5c5c5;"></div><div style="position:absolute;left:457px;top:617px;width:9px;height:9px;background:#ffffff;border:1px solid #848484;box-sizing:border-box;"></div><div style="position:absolute;left:459px;top:621px;width:5px;height:1px;background:#000000;"></div><svg style="position:absolute;left:467px;top:621px;" width="7" height="1" viewBox="0 0 7 1" shape-rendering="crispEdges"><path d="M0 0.5h7" stroke="#848484" stroke-dasharray="1 1"/></svg><svg style="position:absolute;left:474px;top:612px;" width="16" height="16" viewBox="0 0 16 16" shape-rendering="crispEdges"><rect x="1" y="0" width="15" height="15" fill="#c5c5c5"/><rect x="1" y="0" width="15" height="1" fill="#ffffff"/><rect x="1" y="0" width="1" height="15" fill="#ffffff"/><rect x="15" y="0" width="1" height="1" fill="#00ffff"/><rect x="1" y="14" width="1" height="1" fill="#00ffff"/><path d="M2 2L9 6.5L2 11Z" fill="#008400" shape-rendering="auto"/><rect x="6" y="6" width="9" height="4" fill="#0000ff"/><circle cx="7" cy="10.5" r="3.6" fill="#ff0000" shape-rendering="auto"/><rect x="2" y="2" width="11" height="1" fill="#000000"/><rect x="12" y="2" width="1" height="12" fill="#000000"/><path d="M10 11h5l-2.5 3z" fill="#000000" shape-rendering="auto"/><rect x="7" y="8" width="1" height="3" fill="#000000"/><rect x="7" y="10" width="3" height="1" fill="#000000"/></svg><div style="position:absolute;left:494px;top:611px;width:29px;height:18px;background:#000084;"></div><div style="position:absolute;left:497px;top:614px;font-size:11px;line-height:13px;color:#ffffff;font-weight:normal;letter-spacing:0px;white-space:pre;">vdp1</div><svg style="position:absolute;left:482px;top:629px;" width="12" height="12" viewBox="0 0 12 12" shape-rendering="crispEdges"><path d="M0.5 0v10.5h11" stroke="#848484" stroke-dasharray="1 1" fill="none"/></svg><svg style="position:absolute;left:496px;top:631px;" width="16" height="15" viewBox="0 0 16 15" shape-rendering="crispEdges"><rect x="0" y="0" width="16" height="15" fill="#c5c5c5"/><path d="M0.5 14.5v-14h15" stroke="#ffffff" fill="none"/><path d="M15.5 0v14.5h-15" stroke="#848484" fill="none"/><path d="M3.5 2.5l4 3l-4 3" stroke="#000000" fill="none"/><path d="M2 5.5h8" stroke="#000000"/><path d="M9 6.5v0M12 8.5h2.5M2.5 11.5h8v-1" stroke="#000000" fill="none"/><rect x="8.5" y="6.5" width="3" height="3" fill="#ffffff" stroke="#000000"/></svg><div style="position:absolute;left:518px;top:631px;font-size:11px;line-height:13px;color:#000000;font-weight:normal;letter-spacing:-0.15px;white-space:pre;">More Info</div><div style="position:absolute;left:650px;top:583px;width:556px;height:363px;background:#ffffff;box-shadow:inset 1px 1px #848484,inset -1px -1px #ffffff,inset 2px 2px #000000,inset -2px -2px #dedede;"></div><div style="position:absolute;left:454px;top:950px;font-size:11.5px;line-height:13px;color:#000000;font-weight:normal;letter-spacing:0px;white-space:pre;">Ready</div><div style="position:absolute;left:833px;top:948px;width:70px;height:16px;box-shadow:inset 1px 1px #848484,inset -1px -1px #ffffff;"></div><div style="position:absolute;left:836px;top:950px;font-size:11px;line-height:13px;color:#000000;font-weight:normal;letter-spacing:0px;white-space:pre;">100%</div><div style="position:absolute;left:905px;top:948px;width:70px;height:16px;box-shadow:inset 1px 1px #848484,inset -1px -1px #ffffff;"></div><div style="position:absolute;left:977px;top:948px;width:70px;height:16px;box-shadow:inset 1px 1px #848484,inset -1px -1px #ffffff;"></div><div style="position:absolute;left:1049px;top:948px;width:139px;height:16px;box-shadow:inset 1px 1px #848484,inset -1px -1px #ffffff;"></div><div style="position:absolute;left:1052px;top:950px;font-size:11px;line-height:13px;color:#000000;font-weight:normal;letter-spacing:0px;white-space:pre;">ode45</div><svg style="position:absolute;left:1193px;top:951px;shape-rendering:auto" width="13" height="13" viewBox="0 0 13 13" shape-rendering="crispEdges"><path d="M12 0L0 12M12 4L4 12M12 8L8 12" stroke="#ffffff"/><path d="M12 1L1 12M12 5L5 12M12 9L9 12" stroke="#848484"/></svg><svg style="position:absolute;left:652px;top:0px;" width="552" height="1024" viewBox="652 0 552 1024" shape-rendering="crispEdges"><path d="M1062.5 735.5 L1062.5 635.5 L667.5 635.5 L667.5 695.5 L692.5 695.5" fill="none" stroke="#000000"/><path d="M872.5 635.5 L872.5 695.5 L897.5 695.5" fill="none" stroke="#000000"/><path d="M762.5 695.5 L782.5 695.5" fill="none" stroke="#000000"/><path d="M782.5 720.5 L757.5 720.5 L757.5 770.5 L1027.5 770.5" fill="none" stroke="#000000"/><path d="M817.5 710.5 L837.5 710.5" fill="none" stroke="#000000"/><path d="M873.5 710.5 L897.5 710.5" fill="none" stroke="#000000"/><path d="M932.5 705.5 L947.5 705.5" fill="none" stroke="#000000"/><path d="M977.5 705.5 L1012.5 705.5" fill="none" stroke="#000000"/><path d="M997.5 770.5 L997.5 665.5 L1007.5 665.5" fill="none" stroke="#000000"/><path d="M1042.5 705.5 L1142.5 705.5" fill="none" stroke="#000000"/><path d="M1072.5 705.5 L1072.5 645.5 L1082.5 645.5" fill="none" stroke="#000000"/><path d="M1062.5 735.5 L1017.5 735.5 L1017.5 755.5 L1027.5 755.5" fill="none" stroke="#000000"/><path d="M1072.5 765.5 L1097.5 765.5" fill="none" stroke="#000000"/><rect x="871" y="634" width="3" height="3" fill="#000000"/><rect x="996" y="704" width="3" height="3" fill="#000000"/><rect x="996" y="769" width="3" height="3" fill="#000000"/><rect x="1061" y="704" width="3" height="3" fill="#000000"/><rect x="1071" y="704" width="3" height="3" fill="#000000"/><path d="M692 691 L702 695.5 L692 700 Z" fill="#000000" shape-rendering="auto"/><path d="M782 691 L792 695.5 L782 700 Z" fill="#000000" shape-rendering="auto"/><path d="M782 716 L792 720.5 L782 725 Z" fill="#000000" shape-rendering="auto"/><path d="M837 706 L847 710.5 L837 715 Z" fill="#000000" shape-rendering="auto"/><path d="M897 691 L907 695.5 L897 700 Z" fill="#000000" shape-rendering="auto"/><path d="M897 706 L907 710.5 L897 715 Z" fill="#000000" shape-rendering="auto"/><path d="M947 701 L957 705.5 L947 710 Z" fill="#000000" shape-rendering="auto"/><path d="M1012 701 L1022 705.5 L1012 710 Z" fill="#000000" shape-rendering="auto"/><path d="M1007 661 L1017 665.5 L1007 670 Z" fill="#000000" shape-rendering="auto"/><path d="M1142 701 L1152 705.5 L1142 710 Z" fill="#000000" shape-rendering="auto"/><path d="M1082 641 L1092 645.5 L1082 650 Z" fill="#000000" shape-rendering="auto"/><path d="M1027 751 L1037 755.5 L1027 760 Z" fill="#000000" shape-rendering="auto"/><path d="M1027 766 L1037 770.5 L1027 775 Z" fill="#000000" shape-rendering="auto"/><path d="M1097 761 L1107 765.5 L1097 770 Z" fill="#000000" shape-rendering="auto"/><rect x="702.5" y="684.5" width="60" height="22" fill="none" stroke="#000000"/><text x="732" y="698" font-size="10" font-family="Liberation Sans" text-anchor="middle" letter-spacing="0.3" fill="#000000" shape-rendering="auto">1 - u*u</text><rect x="792.5" y="684.5" width="25" height="47" fill="none" stroke="#000000"/><path d="M801 704 L809 712 M809 704 L801 712" stroke="#000000" shape-rendering="auto"/><path d="M847.5 698.5 L873.5 710.5 L847.5 722.5 Z" fill="#ffffff" stroke="#000000" shape-rendering="auto"/><text x="850" y="714" font-size="10" font-family="Liberation Sans" text-anchor="start" letter-spacing="0.3" fill="#000000" shape-rendering="auto">1</text><rect x="907.5" y="687.5" width="25" height="31" fill="none" stroke="#000000"/><text x="910" y="699" font-size="10" font-family="Liberation Sans" text-anchor="start" letter-spacing="0.3" fill="#000000" shape-rendering="auto">–</text><text x="909" y="714" font-size="10" font-family="Liberation Sans" text-anchor="start" letter-spacing="0" fill="#000000" shape-rendering="auto">+</text><rect x="957.5" y="694.5" width="20" height="22" fill="none" stroke="#000000"/><text x="967.5" y="709" font-size="10" font-family="Liberation Sans" text-anchor="middle" letter-spacing="0" fill="#000000" shape-rendering="auto">1/s</text><rect x="1022.5" y="694.5" width="20" height="22" fill="none" stroke="#000000"/><text x="1032.5" y="709" font-size="10" font-family="Liberation Sans" text-anchor="middle" letter-spacing="0" fill="#000000" shape-rendering="auto">1/s</text><circle cx="1027.5" cy="665.5" r="10" fill="#ffffff" stroke="#000000" shape-rendering="auto"/><text x="1027.5" y="669" font-size="10" font-family="Liberation Sans" text-anchor="middle" letter-spacing="0.3" fill="#000000" shape-rendering="auto">2</text><circle cx="1162.5" cy="705.5" r="10" fill="#ffffff" stroke="#000000" shape-rendering="auto"/><text x="1162.5" y="709" font-size="10" font-family="Liberation Sans" text-anchor="middle" letter-spacing="0.3" fill="#000000" shape-rendering="auto">1</text><rect x="1037.5" y="749.5" width="35" height="27" fill="none" stroke="#000000"/><text x="1055" y="765" font-size="10" font-family="Liberation Sans" text-anchor="middle" letter-spacing="0.3" fill="#000000" shape-rendering="auto">Mux</text><rect x="1107.5" y="746.5" width="30" height="38" fill="none" stroke="#000000"/><rect x="1111.5" y="751.5" width="22" height="14" fill="none" stroke="#000000"/><rect x="1092.5" y="630.5" width="90" height="30" fill="none" stroke="#000000"/><rect x="1097.5" y="635.5" width="72" height="13" fill="none" stroke="#000000"/><text x="1166" y="645" font-size="10" font-family="Liberation Sans" text-anchor="end" letter-spacing="0.3" fill="#000000" shape-rendering="auto">0</text><text x="732" y="718" font-size="10" font-family="Liberation Sans" text-anchor="middle" letter-spacing="0.3" fill="#000000" shape-rendering="auto">Fcn</text><text x="860" y="735" font-size="10" font-family="Liberation Sans" text-anchor="middle" letter-spacing="0.3" fill="#000000" shape-rendering="auto">Mu</text><text x="1027" y="687" font-size="10" font-family="Liberation Sans" text-anchor="middle" letter-spacing="0.3" fill="#000000" shape-rendering="auto">Out2</text><text x="1162" y="727" font-size="10" font-family="Liberation Sans" text-anchor="middle" letter-spacing="0.3" fill="#000000" shape-rendering="auto">Out1</text><text x="1122" y="796" font-size="10" font-family="Liberation Sans" text-anchor="middle" letter-spacing="0.3" fill="#000000" shape-rendering="auto">Scope</text><text x="1137" y="672" font-size="10" font-family="Liberation Sans" text-anchor="middle" letter-spacing="0.3" fill="#000000" shape-rendering="auto">Display</text><text x="674" y="692" font-size="10" font-family="Liberation Sans" text-anchor="start" letter-spacing="0.3" fill="#000000" shape-rendering="auto">x1</text><text x="764" y="717" font-size="10" font-family="Liberation Sans" text-anchor="start" letter-spacing="0.3" fill="#000000" shape-rendering="auto">x2</text><text x="879" y="692" font-size="10" font-family="Liberation Sans" text-anchor="start" letter-spacing="0.3" fill="#000000" shape-rendering="auto">x1</text><text x="984" y="702" font-size="10" font-family="Liberation Sans" text-anchor="start" letter-spacing="0.3" fill="#000000" shape-rendering="auto">x2</text><text x="1049" y="702" font-size="10" font-family="Liberation Sans" text-anchor="start" letter-spacing="0.3" fill="#000000" shape-rendering="auto">x1</text><text x="910" y="613" font-size="14" font-family="Liberation Sans" text-anchor="middle" letter-spacing="0" fill="#000000" shape-rendering="auto">van der Pol Equation</text><text x="796" y="809" font-size="10" font-family="Liberation Sans" text-anchor="middle" letter-spacing="0.3" fill="#000000" shape-rendering="auto">The van der Pol Equation</text><text x="796" y="822" font-size="10" font-family="Liberation Sans" text-anchor="middle" letter-spacing="0.3" fill="#000000" shape-rendering="auto">(Double-click on the "?" for more info)</text><text x="796" y="859" font-size="10" font-family="Liberation Sans" text-anchor="middle" letter-spacing="0.3" fill="#000000" shape-rendering="auto">To start and stop the simulation, use the "Start/Stop"</text><text x="796" y="872" font-size="10" font-family="Liberation Sans" text-anchor="middle" letter-spacing="0.3" fill="#000000" shape-rendering="auto">selection in the "Simulation" pull-down menu</text><rect x="915" y="803" width="28" height="26" fill="#000000"/><rect x="912" y="800" width="28" height="26" fill="#ffffff"/><rect x="912.5" y="800.5" width="27" height="25" fill="none" stroke="#000000"/><text x="926" y="815" font-size="10" font-family="Liberation Sans" text-anchor="middle" letter-spacing="0.3" fill="#000000" shape-rendering="auto">?</text><rect x="960" y="803" width="104" height="52" fill="#000000"/><rect x="957" y="800" width="104" height="52" fill="#ffffff"/><rect x="957.5" y="800.5" width="103" height="51" fill="none" stroke="#000000"/><text x="1008" y="815" font-size="10" font-family="Liberation Sans" text-anchor="middle" letter-spacing="0.3" fill="#000000" shape-rendering="auto">Double-click</text><text x="1008" y="828" font-size="10" font-family="Liberation Sans" text-anchor="middle" letter-spacing="0.3" fill="#000000" shape-rendering="auto">here for</text><text x="1008" y="841" font-size="10" font-family="Liberation Sans" text-anchor="middle" letter-spacing="0.3" fill="#000000" shape-rendering="auto">Simulink Help</text></svg><div style="position:absolute;left:0px;top:996px;width:1280px;height:28px;background:#c5c5c5;box-shadow:inset 0 1px #dedede,inset 0 2px #ffffff;"></div><div style="position:absolute;left:2px;top:1000px;width:59px;height:22px;background:#c5c5c5;box-shadow:inset -1px -1px #000000,inset 1px 1px #ffffff,inset -2px -2px #848484,inset 2px 2px #dedede;"></div><svg style="position:absolute;left:5px;top:1003px" width="18" height="17" viewBox="5 1003 18 17" shape-rendering="crispEdges"><path d="M13 1005h2v-1h5v1h2v13h-1v-1h-4v1h-3v-1h-3v1h-2v-1h-1v-10h3v-1h2z" fill="#000000"/><path d="M14 1006h2v4h-2z" fill="#ff0000"/><path d="M18 1006h2v4h-2z" fill="#00ff00"/><path d="M14 1011h2v4h-2z" fill="#0000ff"/><path d="M18 1011h2v4h-2z" fill="#ffff00"/><path d="M8 1009h4v2h-4z" fill="#ff0000"/><path d="M8 1013h4v2h-4z" fill="#0000ff"/><rect x="6" y="1006" width="1" height="1" fill="#000000"/><rect x="6" y="1009" width="1" height="1" fill="#ff0000"/><rect x="6" y="1013" width="1" height="1" fill="#0000ff"/><rect x="6" y="1016" width="1" height="1" fill="#000000"/></svg><div style="position:absolute;left:25px;top:1004px;font-size:13px;line-height:15px;color:#000000;font-weight:bold;letter-spacing:0px;white-space:pre;">Start</div><div style="position:absolute;left:64px;top:998px;width:1px;height:24px;background:#848484;"></div><div style="position:absolute;left:65px;top:998px;width:1px;height:24px;background:#ffffff;"></div><div style="position:absolute;left:67px;top:1002px;width:3px;height:18px;background:#c5c5c5;box-shadow:inset -1px -1px #848484,inset 1px 1px #ffffff;"></div><svg style="position:absolute;left:79px;top:1002px;shape-rendering:auto" width="18" height="18" viewBox="0 0 18 18" shape-rendering="crispEdges"><path d="M3.5 2.5l6 2v12l-6-2z" fill="#ffffff" stroke="#000000" stroke-width="0.8"/><path d="M9.5 4.5l2-1v12l-2 1z" fill="#848484"/><circle cx="5.5" cy="6" r="1.5" fill="#ff0000"/><path d="M6 9v6M8 10v6" stroke="#0000ff"/></svg><svg style="position:absolute;left:99px;top:1002px;shape-rendering:auto" width="18" height="18" viewBox="0 0 18 18" shape-rendering="crispEdges"><path d="M1 3h5l3 4l3-4h5l-5 6l5 6h-5l-3-4l-3 4H1l5-6z" fill="#00c5c5" stroke="#000000" stroke-width="0.8"/><path d="M3 3l11 12" stroke="#ffffff" stroke-width="0.8"/></svg><svg style="position:absolute;left:122px;top:1002px;shape-rendering:auto" width="18" height="18" viewBox="0 0 18 18" shape-rendering="crispEdges"><g transform="translate(0,0) scale(0.55)"><path d="M22 5Q30 1 31 6Q31 10 27 13" stroke="#0000ff" stroke-width="2" fill="none"/><path d="M9 27Q3 32 3 27Q3 24 6 21" stroke="#0000ff" stroke-width="2" fill="none"/><path d="M8.5 17A9 7.5 0 0 1 26.5 17Z" stroke="#0000ff" stroke-width="5.5" fill="none" stroke-linejoin="round"/><path d="M8.5 17A9 8 0 0 0 25.5 23" stroke="#0000ff" stroke-width="5.5" fill="none"/><path d="M12 14.5Q17.5 9 23 14.5" stroke="#000000" stroke-width="1" fill="none" opacity="0.7"/><path d="M5.5 26Q7 13 16 7.5" stroke="#ffff00" stroke-width="2" fill="none"/><path d="M5 27Q5.5 22 7 18" stroke="#c5a500" stroke-width="1.5" fill="none"/></g></svg><svg style="position:absolute;left:147px;top:1002px;shape-rendering:auto" width="18" height="18" viewBox="0 0 18 18" shape-rendering="crispEdges"><path d="M1.5 1.5h8l3 3v12h-11z" fill="#ffffff" stroke="#000000"/><path d="M6 7q2-1 3 0v3q-1-1-3 0zM9 7q2 1 3 0v3q-1 1-3 0zM6 11q2-1 3 0v3q-1-1-3 0zM9 11q2 1 3 0v3q-1 1-3 0z" fill="#ce0000"/><path d="M6 7q2-1 3 0v3q-1-1-3 0z" fill="#ff0000"/><path d="M9 7q2 1 3 0v3q-1 1-3 0z" fill="#00ad00"/><path d="M6 11q2-1 3 0v3q-1-1-3 0z" fill="#0000ff"/><path d="M9 11q2 1 3 0v3q-1 1-3 0z" fill="#efef00"/><path d="M3 8h2M3 10h2M3 12h2" stroke="#ff0000"/></svg><svg style="position:absolute;left:168px;top:1002px;shape-rendering:auto" width="18" height="18" viewBox="0 0 18 18" shape-rendering="crispEdges"><g transform="translate(0,0) scale(0.36)"><path d="M22 5Q30 1 31 6Q31 10 27 13" stroke="#0000ff" stroke-width="2" fill="none"/><path d="M9 27Q3 32 3 27Q3 24 6 21" stroke="#0000ff" stroke-width="2" fill="none"/><path d="M8.5 17A9 7.5 0 0 1 26.5 17Z" stroke="#0000ff" stroke-width="5.5" fill="none" stroke-linejoin="round"/><path d="M8.5 17A9 8 0 0 0 25.5 23" stroke="#0000ff" stroke-width="5.5" fill="none"/><path d="M12 14.5Q17.5 9 23 14.5" stroke="#000000" stroke-width="1" fill="none" opacity="0.7"/><path d="M5.5 26Q7 13 16 7.5" stroke="#ffff00" stroke-width="2" fill="none"/><path d="M5 27Q5.5 22 7 18" stroke="#c5a500" stroke-width="1.5" fill="none"/></g><rect x="5.5" y="8.5" width="12" height="8" fill="#ffffff" stroke="#000000"/><path d="M8 13h6" stroke="#0000ff"/><rect x="14" y="10" width="2" height="2" fill="#ff0000"/></svg><svg style="position:absolute;left:191px;top:1002px;shape-rendering:auto" width="18" height="18" viewBox="0 0 18 18" shape-rendering="crispEdges"><circle cx="6" cy="5" r="4" fill="#ffffff" stroke="#000000"/><path d="M4 3l2 2l2-2" stroke="#000000" fill="none"/><rect x="4.5" y="7.5" width="13" height="9" fill="#ffffff" stroke="#000000"/><path d="M7 12h8M7 14h6" stroke="#0000ff"/><rect x="14" y="9" width="2" height="2" fill="#ff0000"/></svg><svg style="position:absolute;left:213px;top:1002px;shape-rendering:auto" width="18" height="18" viewBox="0 0 18 18" shape-rendering="crispEdges"><text x="0" y="14" font-size="15" font-weight="bold" font-style="italic" fill="#00e6e6" stroke="#000000" stroke-width="0.7" font-family="Liberation Sans">W</text></svg><svg style="position:absolute;left:237px;top:1002px;shape-rendering:auto" width="18" height="18" viewBox="0 0 18 18" shape-rendering="crispEdges"><rect x="1.5" y="2.5" width="15" height="12" fill="#ffffff" stroke="#000000"/><rect x="2" y="3" width="14" height="2.5" fill="#000084"/><path d="M2 14.5h14M16 3v11" stroke="#848484"/></svg><svg style="position:absolute;left:259px;top:1002px;shape-rendering:auto" width="18" height="18" viewBox="0 0 18 18" shape-rendering="crispEdges"><rect x="1.5" y="2.5" width="15" height="14" fill="#c5efff" stroke="#000000"/><path d="M4 14l2-5l8-8l2 2l-8 8z" fill="#ffffff" stroke="#000000" stroke-width="0.8"/><path d="M13 2l2 2" stroke="#ff0000" stroke-width="1.5"/><path d="M14 1l2 2" stroke="#ffff00"/></svg><div style="position:absolute;left:284px;top:998px;width:1px;height:24px;background:#848484;"></div><div style="position:absolute;left:285px;top:998px;width:1px;height:24px;background:#ffffff;"></div><div style="position:absolute;left:287px;top:1002px;width:3px;height:18px;background:#c5c5c5;box-shadow:inset -1px -1px #848484,inset 1px 1px #ffffff;"></div><div style="position:absolute;left:296px;top:1000px;width:35px;height:22px;background:#c5c5c5;box-shadow:inset -1px -1px #000000,inset 1px 1px #ffffff,inset -2px -2px #848484,inset 2px 2px #dedede;"></div><svg style="position:absolute;left:299px;top:1003px;shape-rendering:auto" width="17" height="17" viewBox="0 0 17 17" shape-rendering="crispEdges"><path d="M5.5 1.5h7l3 3v11h-10z" fill="#ffffff" stroke="#000000"/><g transform="translate(0,1) scale(0.5)"><path d="M22 5Q30 1 31 6Q31 10 27 13" stroke="#0000ff" stroke-width="2" fill="none"/><path d="M9 27Q3 32 3 27Q3 24 6 21" stroke="#0000ff" stroke-width="2" fill="none"/><path d="M8.5 17A9 7.5 0 0 1 26.5 17Z" stroke="#0000ff" stroke-width="5.5" fill="none" stroke-linejoin="round"/><path d="M8.5 17A9 8 0 0 0 25.5 23" stroke="#0000ff" stroke-width="5.5" fill="none"/><path d="M12 14.5Q17.5 9 23 14.5" stroke="#000000" stroke-width="1" fill="none" opacity="0.7"/><path d="M5.5 26Q7 13 16 7.5" stroke="#ffff00" stroke-width="2" fill="none"/><path d="M5 27Q5.5 22 7 18" stroke="#c5a500" stroke-width="1.5" fill="none"/></g></svg><div style="position:absolute;left:317px;top:1004px;font-size:13px;line-height:15px;color:#000000;font-weight:normal;letter-spacing:0px;white-space:pre;">E.</div><div style="position:absolute;left:334px;top:1000px;width:35px;height:22px;background:#c5c5c5;box-shadow:inset -1px -1px #000000,inset 1px 1px #ffffff,inset -2px -2px #848484,inset 2px 2px #dedede;"></div><svg style="position:absolute;left:337px;top:1003px;shape-rendering:auto" width="17" height="17" viewBox="0 0 17 17" shape-rendering="crispEdges"><path d="M2 14L8 2l2 6l6 6" stroke="#ef0000" stroke-width="1.5" fill="none"/><path d="M2 9h12" stroke="#ef0000"/><circle cx="12" cy="13" r="2.5" fill="#ffffff" stroke="#ef0000"/></svg><div style="position:absolute;left:355px;top:1004px;font-size:13px;line-height:15px;color:#000000;font-weight:normal;letter-spacing:0px;white-space:pre;">D</div><div style="position:absolute;left:372px;top:1000px;width:35px;height:22px;background:#c5c5c5;box-shadow:inset -1px -1px #000000,inset 1px 1px #ffffff,inset -2px -2px #848484,inset 2px 2px #dedede;"></div><svg style="position:absolute;left:375px;top:1003px;shape-rendering:auto" width="17" height="17" viewBox="0 0 17 17" shape-rendering="crispEdges"><path d="M1 3h6l1 1h7v10H1z" fill="#ffff84" stroke="#000000"/><circle cx="8" cy="8" r="4" fill="#84ffff" stroke="#000000"/><path d="M11 11l4 4" stroke="#0000ff" stroke-width="2"/></svg><div style="position:absolute;left:393px;top:1004px;font-size:13px;line-height:15px;color:#000000;font-weight:normal;letter-spacing:0px;white-space:pre;">E.</div><div style="position:absolute;left:410px;top:1000px;width:35px;height:22px;background:#c5c5c5;box-shadow:inset -1px -1px #000000,inset 1px 1px #ffffff,inset -2px -2px #848484,inset 2px 2px #dedede;"></div><svg style="position:absolute;left:413px;top:1003px;shape-rendering:auto" width="17" height="17" viewBox="0 0 17 17" shape-rendering="crispEdges"><path d="M1 4Q8 0 16 4L14 6Q8 3 2 6z" fill="#e6e6a5"/><path d="M6 5h4l-1 10h-2z" fill="#848484"/></svg><div style="position:absolute;left:431px;top:1004px;font-size:13px;line-height:15px;color:#000000;font-weight:normal;letter-spacing:0px;white-space:pre;">e.</div><div style="position:absolute;left:448px;top:1000px;width:35px;height:22px;background:#c5c5c5;box-shadow:inset -1px -1px #000000,inset 1px 1px #ffffff,inset -2px -2px #848484,inset 2px 2px #dedede;"></div><svg style="position:absolute;left:451px;top:1003px;shape-rendering:auto" width="17" height="17" viewBox="0 0 17 17" shape-rendering="crispEdges"><rect x="1" y="1" width="15" height="15" fill="#212142"/><path d="M2 8l12-4M2 11l12-4M2 14l12-4" stroke="#ffffff" stroke-width="1.5"/></svg><div style="position:absolute;left:469px;top:1004px;font-size:13px;line-height:15px;color:#000000;font-weight:normal;letter-spacing:0px;white-space:pre;">A.</div><div style="position:absolute;left:486px;top:1000px;width:35px;height:22px;background:#c5c5c5;box-shadow:inset -1px -1px #000000,inset 1px 1px #ffffff,inset -2px -2px #848484,inset 2px 2px #dedede;"></div><svg style="position:absolute;left:489px;top:1003px;shape-rendering:auto" width="17" height="17" viewBox="0 0 17 17" shape-rendering="crispEdges"><path d="M2 6l9-5l6 9l-9 5z" fill="#ffe684" stroke="#000000"/><path d="M5 6l5-2M6 9l5-2" stroke="#ce0000"/></svg><div style="position:absolute;left:507px;top:1004px;font-size:13px;line-height:15px;color:#000000;font-weight:normal;letter-spacing:0px;white-space:pre;">g.</div><div style="position:absolute;left:524px;top:1000px;width:35px;height:22px;background:#c5c5c5;box-shadow:inset -1px -1px #000000,inset 1px 1px #ffffff,inset -2px -2px #848484,inset 2px 2px #dedede;"></div><svg style="position:absolute;left:527px;top:1003px;shape-rendering:auto" width="17" height="17" viewBox="0 0 17 17" shape-rendering="crispEdges"><rect x="8" y="1" width="6" height="13" fill="#c5c5c5" stroke="#000000"/><rect x="1" y="8" width="7" height="6" fill="#0000c5" stroke="#000000"/><path d="M1 15h15" stroke="#000000"/></svg><div style="position:absolute;left:545px;top:1004px;font-size:13px;line-height:15px;color:#000000;font-weight:normal;letter-spacing:0px;white-space:pre;">T.</div><div style="position:absolute;left:562px;top:1000px;width:35px;height:22px;background:#c5c5c5;box-shadow:inset -1px -1px #000000,inset 1px 1px #ffffff,inset -2px -2px #848484,inset 2px 2px #dedede;"></div><svg style="position:absolute;left:565px;top:1003px;shape-rendering:auto" width="17" height="17" viewBox="0 0 17 17" shape-rendering="crispEdges"><path d="M5.5 1.5h7l3 3v11h-10z" fill="#ffffff" stroke="#000000"/><g transform="translate(0,1) scale(0.5)"><path d="M22 5Q30 1 31 6Q31 10 27 13" stroke="#0000ff" stroke-width="2" fill="none"/><path d="M9 27Q3 32 3 27Q3 24 6 21" stroke="#0000ff" stroke-width="2" fill="none"/><path d="M8.5 17A9 7.5 0 0 1 26.5 17Z" stroke="#0000ff" stroke-width="5.5" fill="none" stroke-linejoin="round"/><path d="M8.5 17A9 8 0 0 0 25.5 23" stroke="#0000ff" stroke-width="5.5" fill="none"/><path d="M12 14.5Q17.5 9 23 14.5" stroke="#000000" stroke-width="1" fill="none" opacity="0.7"/><path d="M5.5 26Q7 13 16 7.5" stroke="#ffff00" stroke-width="2" fill="none"/><path d="M5 27Q5.5 22 7 18" stroke="#c5a500" stroke-width="1.5" fill="none"/></g></svg><div style="position:absolute;left:583px;top:1004px;font-size:13px;line-height:15px;color:#000000;font-weight:normal;letter-spacing:0px;white-space:pre;">W</div><div style="position:absolute;left:600px;top:1000px;width:35px;height:22px;background:#c5c5c5;box-shadow:inset -1px -1px #000000,inset 1px 1px #ffffff,inset -2px -2px #848484,inset 2px 2px #dedede;"></div><svg style="position:absolute;left:603px;top:1003px;shape-rendering:auto" width="17" height="17" viewBox="0 0 17 17" shape-rendering="crispEdges"><ellipse cx="8" cy="9" rx="7" ry="6" fill="#c57331" stroke="#000000"/><circle cx="5" cy="6" r="1.5" fill="#ffff00"/><circle cx="9" cy="5" r="1.5" fill="#00ce00"/><circle cx="12" cy="8" r="1.5" fill="#0000ff"/><path d="M1 1l14 12" stroke="#000000" stroke-width="1.5"/></svg><div style="position:absolute;left:621px;top:1004px;font-size:13px;line-height:15px;color:#000000;font-weight:normal;letter-spacing:0px;white-space:pre;">P.</div><div style="position:absolute;left:638px;top:1000px;width:35px;height:22px;background:#c5c5c5;box-shadow:inset -1px -1px #000000,inset 1px 1px #ffffff,inset -2px -2px #848484,inset 2px 2px #dedede;"></div><svg style="position:absolute;left:641px;top:1003px;shape-rendering:auto" width="17" height="17" viewBox="0 0 17 17" shape-rendering="crispEdges"><path d="M5.5 1.5h7l3 3v11h-10z" fill="#ffffff" stroke="#000000"/><g transform="translate(0,1) scale(0.5)"><path d="M22 5Q30 1 31 6Q31 10 27 13" stroke="#0000ff" stroke-width="2" fill="none"/><path d="M9 27Q3 32 3 27Q3 24 6 21" stroke="#0000ff" stroke-width="2" fill="none"/><path d="M8.5 17A9 7.5 0 0 1 26.5 17Z" stroke="#0000ff" stroke-width="5.5" fill="none" stroke-linejoin="round"/><path d="M8.5 17A9 8 0 0 0 25.5 23" stroke="#0000ff" stroke-width="5.5" fill="none"/><path d="M12 14.5Q17.5 9 23 14.5" stroke="#000000" stroke-width="1" fill="none" opacity="0.7"/><path d="M5.5 26Q7 13 16 7.5" stroke="#ffff00" stroke-width="2" fill="none"/><path d="M5 27Q5.5 22 7 18" stroke="#c5a500" stroke-width="1.5" fill="none"/></g></svg><div style="position:absolute;left:659px;top:1004px;font-size:13px;line-height:15px;color:#000000;font-weight:normal;letter-spacing:0px;white-space:pre;">T.</div><div style="position:absolute;left:676px;top:1000px;width:35px;height:22px;background:#c5c5c5;box-shadow:inset -1px -1px #000000,inset 1px 1px #ffffff,inset -2px -2px #848484,inset 2px 2px #dedede;"></div><svg style="position:absolute;left:679px;top:1003px;shape-rendering:auto" width="17" height="17" viewBox="0 0 17 17" shape-rendering="crispEdges"><path d="M5.5 1.5h7l3 3v11h-10z" fill="#ffffff" stroke="#000000"/><g transform="translate(0,1) scale(0.5)"><path d="M22 5Q30 1 31 6Q31 10 27 13" stroke="#0000ff" stroke-width="2" fill="none"/><path d="M9 27Q3 32 3 27Q3 24 6 21" stroke="#0000ff" stroke-width="2" fill="none"/><path d="M8.5 17A9 7.5 0 0 1 26.5 17Z" stroke="#0000ff" stroke-width="5.5" fill="none" stroke-linejoin="round"/><path d="M8.5 17A9 8 0 0 0 25.5 23" stroke="#0000ff" stroke-width="5.5" fill="none"/><path d="M12 14.5Q17.5 9 23 14.5" stroke="#000000" stroke-width="1" fill="none" opacity="0.7"/><path d="M5.5 26Q7 13 16 7.5" stroke="#ffff00" stroke-width="2" fill="none"/><path d="M5 27Q5.5 22 7 18" stroke="#c5a500" stroke-width="1.5" fill="none"/></g></svg><div style="position:absolute;left:697px;top:1004px;font-size:13px;line-height:15px;color:#000000;font-weight:normal;letter-spacing:0px;white-space:pre;">H</div><div style="position:absolute;left:714px;top:1000px;width:35px;height:22px;background:#c5c5c5;box-shadow:inset -1px -1px #000000,inset 1px 1px #ffffff,inset -2px -2px #848484,inset 2px 2px #dedede;"></div><svg style="position:absolute;left:717px;top:1003px;shape-rendering:auto" width="17" height="17" viewBox="0 0 17 17" shape-rendering="crispEdges"><path d="M1 8l8-5l7 4l-8 6z" fill="#d69452" stroke="#633100"/><path d="M1 8v2l7 5l8-6v-2" fill="#b57331" stroke="#633100"/></svg><div style="position:absolute;left:735px;top:1004px;font-size:13px;line-height:15px;color:#000000;font-weight:normal;letter-spacing:0px;white-space:pre;">E.</div><div style="position:absolute;left:752px;top:1000px;width:35px;height:22px;background:#c5c5c5;box-shadow:inset -1px -1px #000000,inset 1px 1px #ffffff,inset -2px -2px #848484,inset 2px 2px #dedede;"></div><svg style="position:absolute;left:755px;top:1003px;shape-rendering:auto" width="17" height="17" viewBox="0 0 17 17" shape-rendering="crispEdges"><rect x="2" y="1" width="12" height="9" fill="#c5c5c5" stroke="#000000"/><rect x="4" y="3" width="8" height="5" fill="#008400"/><path d="M5 6l2-2l2 3l2-2" stroke="#00ff00"/><rect x="1" y="11" width="14" height="4" fill="#c5c5c5" stroke="#000000"/></svg><div style="position:absolute;left:773px;top:1004px;font-size:13px;line-height:15px;color:#000000;font-weight:normal;letter-spacing:0px;white-space:pre;">W</div><div style="position:absolute;left:790px;top:1000px;width:35px;height:22px;background:#c5c5c5;box-shadow:inset -1px -1px #000000,inset 1px 1px #ffffff,inset -2px -2px #848484,inset 2px 2px #dedede;"></div><svg style="position:absolute;left:793px;top:1003px;shape-rendering:auto" width="17" height="17" viewBox="0 0 17 17" shape-rendering="crispEdges"><path d="M5.5 1.5h7l3 3v11h-10z" fill="#ffffff" stroke="#000000"/><g transform="translate(0,1) scale(0.5)"><path d="M22 5Q30 1 31 6Q31 10 27 13" stroke="#0000ff" stroke-width="2" fill="none"/><path d="M9 27Q3 32 3 27Q3 24 6 21" stroke="#0000ff" stroke-width="2" fill="none"/><path d="M8.5 17A9 7.5 0 0 1 26.5 17Z" stroke="#0000ff" stroke-width="5.5" fill="none" stroke-linejoin="round"/><path d="M8.5 17A9 8 0 0 0 25.5 23" stroke="#0000ff" stroke-width="5.5" fill="none"/><path d="M12 14.5Q17.5 9 23 14.5" stroke="#000000" stroke-width="1" fill="none" opacity="0.7"/><path d="M5.5 26Q7 13 16 7.5" stroke="#ffff00" stroke-width="2" fill="none"/><path d="M5 27Q5.5 22 7 18" stroke="#c5a500" stroke-width="1.5" fill="none"/></g></svg><div style="position:absolute;left:811px;top:1004px;font-size:13px;line-height:15px;color:#000000;font-weight:normal;letter-spacing:0px;white-space:pre;">W</div><div style="position:absolute;left:828px;top:1000px;width:35px;height:22px;background:#c5c5c5;box-shadow:inset -1px -1px #000000,inset 1px 1px #ffffff,inset -2px -2px #848484,inset 2px 2px #dedede;"></div><svg style="position:absolute;left:831px;top:1003px;shape-rendering:auto" width="17" height="17" viewBox="0 0 17 17" shape-rendering="crispEdges"><rect x="1" y="1" width="15" height="15" fill="#ffffff" stroke="#000000"/><text x="2" y="12" font-size="10" font-weight="bold" fill="#000000" font-family="Liberation Sans">nc</text><path d="M3 14l4-8" stroke="#ff0000" stroke-width="1.5"/></svg><div style="position:absolute;left:849px;top:1004px;font-size:13px;line-height:15px;color:#000000;font-weight:normal;letter-spacing:0px;white-space:pre;">p.</div><div style="position:absolute;left:866px;top:1000px;width:35px;height:22px;background:#c5c5c5;box-shadow:inset -1px -1px #000000,inset 1px 1px #ffffff,inset -2px -2px #848484,inset 2px 2px #dedede;"></div><svg style="position:absolute;left:869px;top:1003px;shape-rendering:auto" width="17" height="17" viewBox="0 0 17 17" shape-rendering="crispEdges"><path d="M5.5 1.5h7l3 3v11h-10z" fill="#ffffff" stroke="#000000"/><g transform="translate(0,1) scale(0.5)"><path d="M22 5Q30 1 31 6Q31 10 27 13" stroke="#0000ff" stroke-width="2" fill="none"/><path d="M9 27Q3 32 3 27Q3 24 6 21" stroke="#0000ff" stroke-width="2" fill="none"/><path d="M8.5 17A9 7.5 0 0 1 26.5 17Z" stroke="#0000ff" stroke-width="5.5" fill="none" stroke-linejoin="round"/><path d="M8.5 17A9 8 0 0 0 25.5 23" stroke="#0000ff" stroke-width="5.5" fill="none"/><path d="M12 14.5Q17.5 9 23 14.5" stroke="#000000" stroke-width="1" fill="none" opacity="0.7"/><path d="M5.5 26Q7 13 16 7.5" stroke="#ffff00" stroke-width="2" fill="none"/><path d="M5 27Q5.5 22 7 18" stroke="#c5a500" stroke-width="1.5" fill="none"/></g></svg><div style="position:absolute;left:887px;top:1004px;font-size:13px;line-height:15px;color:#000000;font-weight:normal;letter-spacing:0px;white-space:pre;">W</div><div style="position:absolute;left:904px;top:1000px;width:35px;height:22px;background:#c5c5c5;box-shadow:inset -1px -1px #000000,inset 1px 1px #ffffff,inset -2px -2px #848484,inset 2px 2px #dedede;"></div><svg style="position:absolute;left:907px;top:1003px;shape-rendering:auto" width="17" height="17" viewBox="0 0 17 17" shape-rendering="crispEdges"><path d="M1 12l6-3l3-8l6 14l-4-2l-4 2z" fill="#e66300" stroke="#840000"/><path d="M1 12l6-3l2 3z" fill="#42a5c5"/></svg><div style="position:absolute;left:925px;top:1004px;font-size:13px;line-height:15px;color:#000000;font-weight:normal;letter-spacing:0px;white-space:pre;">H</div><div style="position:absolute;left:942px;top:1000px;width:35px;height:22px;background:#c5c5c5;box-shadow:inset -1px -1px #000000,inset 1px 1px #ffffff,inset -2px -2px #848484,inset 2px 2px #dedede;"></div><svg style="position:absolute;left:945px;top:1003px;shape-rendering:auto" width="17" height="17" viewBox="0 0 17 17" shape-rendering="crispEdges"><path d="M1 12l6-3l3-8l6 14l-4-2l-4 2z" fill="#e66300" stroke="#840000"/><path d="M1 12l6-3l2 3z" fill="#42a5c5"/></svg><div style="position:absolute;left:963px;top:1004px;font-size:13px;line-height:15px;color:#000000;font-weight:normal;letter-spacing:0px;white-space:pre;">M</div><div style="position:absolute;left:980px;top:1000px;width:35px;height:22px;background:#c5c5c5;box-shadow:inset -1px -1px #000000,inset 1px 1px #ffffff,inset -2px -2px #848484,inset 2px 2px #dedede;"></div><svg style="position:absolute;left:983px;top:1003px;shape-rendering:auto" width="17" height="17" viewBox="0 0 17 17" shape-rendering="crispEdges"><rect x="0" y="0" width="16" height="16" fill="#c5c5c5"/><path d="M2 2l6 5v-5z" fill="#008400"/><rect x="7" y="6" width="8" height="4" fill="#0000ff"/><circle cx="6" cy="10" r="3.5" fill="#ff0000"/><path d="M2 2h10v11" stroke="#000000" fill="none"/><path d="M10 12h4l-2 2z" fill="#000000"/></svg><div style="position:absolute;left:1001px;top:1004px;font-size:13px;line-height:15px;color:#000000;font-weight:normal;letter-spacing:0px;white-space:pre;">v.</div><div style="position:absolute;left:1018px;top:1000px;width:35px;height:22px;background:#c5c5c5;box-shadow:inset -1px -1px #000000,inset 1px 1px #ffffff,inset -2px -2px #848484,inset 2px 2px #dedede;"></div><svg style="position:absolute;left:1021px;top:1003px;shape-rendering:auto" width="17" height="17" viewBox="0 0 17 17" shape-rendering="crispEdges"><path d="M1 11h6v4H1z" fill="#ffffff" stroke="#000000"/><circle cx="6" cy="9" r="3" fill="#00ffff" stroke="#000000"/><path d="M8 6l6-5M9 9l5 4" stroke="#000084" stroke-width="2"/></svg><div style="position:absolute;left:1039px;top:1004px;font-size:13px;line-height:15px;color:#000000;font-weight:normal;letter-spacing:0px;white-space:pre;">M</div><div style="position:absolute;left:1056px;top:1000px;width:35px;height:22px;background-color:#ffffff;background-image:repeating-conic-gradient(#c5c5c5 0 25%,#ffffff 0 50%);background-size:2px 2px;box-shadow:inset 1px 1px #000000,inset -1px -1px #ffffff,inset 2px 2px #848484,inset -2px -2px #dedede;"></div><svg style="position:absolute;left:1060px;top:1004px;shape-rendering:auto" width="17" height="17" viewBox="0 0 17 17" shape-rendering="crispEdges"><rect x="0" y="0" width="16" height="16" fill="#c5c5c5"/><path d="M2 2l6 5v-5z" fill="#008400"/><rect x="7" y="6" width="8" height="4" fill="#0000ff"/><circle cx="6" cy="10" r="3.5" fill="#ff0000"/><path d="M2 2h10v11" stroke="#000000" fill="none"/><path d="M10 12h4l-2 2z" fill="#000000"/></svg><div style="position:absolute;left:1078px;top:1005px;font-size:13px;line-height:15px;color:#000000;font-weight:bold;letter-spacing:0px;white-space:pre;">v.</div><div style="position:absolute;left:1114px;top:998px;width:1px;height:24px;background:#848484;"></div><div style="position:absolute;left:1115px;top:998px;width:1px;height:24px;background:#ffffff;"></div><div style="position:absolute;left:1118px;top:1000px;width:160px;height:22px;box-shadow:inset 1px 1px #848484,inset -1px -1px #ffffff;"></div><svg style="position:absolute;left:1120px;top:1003px;shape-rendering:auto" width="16" height="16" viewBox="0 0 16 16" shape-rendering="crispEdges"><path d="M2 6h2l6-5v14l-6-5H2z" fill="#ffff00" stroke="#000000"/><path d="M4 6v4" stroke="#848400"/><path d="M11.5 5l2-2M11.5 8h3M11.5 11l2 2" stroke="#a5a5a5"/></svg><svg style="position:absolute;left:1136px;top:1003px;shape-rendering:auto" width="18" height="16" viewBox="0 0 18 16" shape-rendering="crispEdges"><rect x="2" y="2" width="14" height="10" fill="#008400"/><path d="M3 4h12M3 7h12M3 10h12" stroke="#ffff00"/><rect x="6" y="11" width="8" height="4" fill="#ffff00" stroke="#000000"/></svg><svg style="position:absolute;left:1155px;top:1003px;shape-rendering:auto" width="16" height="16" viewBox="0 0 16 16" shape-rendering="crispEdges"><rect x="0" y="0" width="16" height="16" fill="#ffffff"/><text x="1" y="12" font-size="10" font-weight="bold" fill="#000000" font-family="Liberation Sans">nc</text><path d="M1 14h14" stroke="#0000ff"/></svg><svg style="position:absolute;left:1172px;top:1002px;shape-rendering:auto" width="17" height="17" viewBox="0 0 17 17" shape-rendering="crispEdges"><rect x="0" y="0" width="17" height="17" fill="#000000"/><rect x="1" y="1" width="15" height="15" fill="#008400"/><path d="M1 9h4l2-5l3 9l2-4h4" stroke="#ffff00" stroke-width="1.5" fill="none"/></svg><svg style="position:absolute;left:1191px;top:1004px;" width="13" height="13" viewBox="0 0 13 13" shape-rendering="crispEdges"><rect x="0" y="0" width="13" height="13" fill="#ffffff"/><rect x="0" y="0" width="12" height="12" fill="#000000"/><rect x="1" y="1" width="11" height="11" fill="#008400"/><path d="M2 2.5h9M2 4.5h9M2 6.5h9M2 8.5h9M2 10.5h9" stroke="#000000" stroke-dasharray="1 1"/></svg><div style="position:absolute;left:1219px;top:1006px;font-size:12.5px;line-height:14px;color:#000000;font-weight:normal;letter-spacing:0px;white-space:pre;">3:07 PM</div><svg style="position:absolute;left:1254px;top:894px;shape-rendering:auto" width="14" height="22" viewBox="0 0 14 22" shape-rendering="crispEdges"><path d="M1 1v16l4-4l3 7l2-1l-3-7h5z" fill="#ffffff" stroke="#000000"/></svg>
</body></html>
